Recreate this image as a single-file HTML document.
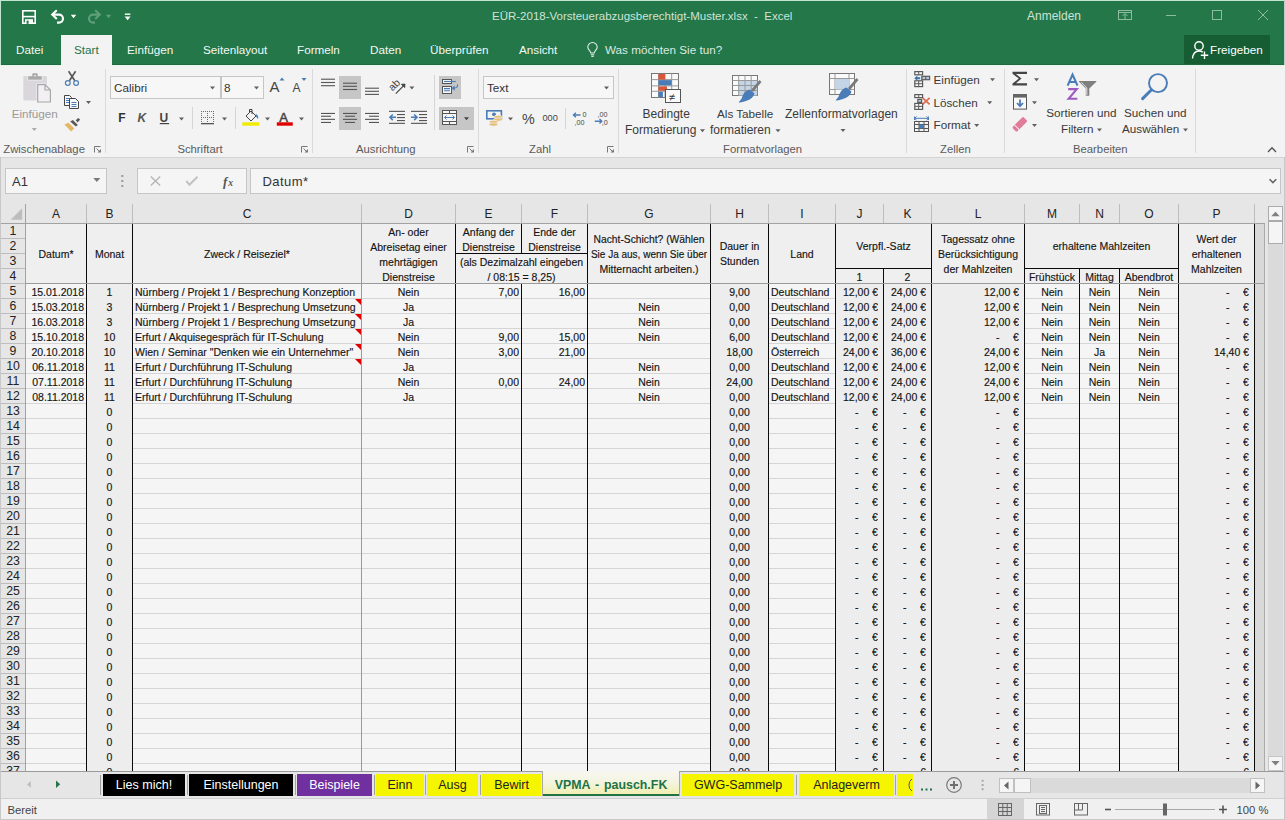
<!DOCTYPE html><html><head><meta charset="utf-8"><title>Excel</title><style>
*{margin:0;padding:0;box-sizing:border-box}
html,body{width:1285px;height:820px;overflow:hidden}
body{position:relative;background:#f3f3f3;font-family:"Liberation Sans",sans-serif;color:#222}
.a{position:absolute}
.t{position:absolute;white-space:nowrap}
.c{position:absolute;white-space:nowrap;font-size:10.5px;line-height:15px;height:15px;color:#1b1b1b;overflow:hidden;-webkit-text-stroke:0.15px #141414}
.cc{text-align:center}
.cr{text-align:right}
.hl{position:absolute;height:1px}
.vl{position:absolute;width:1px}
svg{position:absolute;overflow:visible}
</style></head><body><div class="a" style="left:0px;top:0px;width:1285px;height:65px;background:#237749"></div>
<div class="a" style="left:0px;top:0px;width:1285px;height:1px;background:#c3e6d1"></div>
<div class="a" style="left:0px;top:0px;width:1px;height:65px;background:#c3e6d1"></div>
<div class="a" style="left:0px;top:65px;width:1px;height:755px;background:#c8c8c8"></div>
<div class="a" style="left:1284px;top:0px;width:1px;height:820px;background:#c8c8c8"></div>
<svg style="left:0;top:0" width="140" height="34">
<g fill="none" stroke="#fff" stroke-width="1.6">
<rect x="22.8" y="10.8" width="12.4" height="12.4"/>
<line x1="22.8" y1="16.6" x2="35.2" y2="16.6"/>
</g>
<rect x="25" y="19.2" width="8" height="4.6" fill="#fff"/>
<rect x="26.6" y="20.6" width="2" height="3.2" fill="#237749"/>
<path d="M56.8 10.2 L52.2 14.6 L56.8 19" fill="none" stroke="#fff" stroke-width="2.1"/>
<path d="M52.8 14.6 H59 A4 4 0 0 1 59 22.6 H57" fill="none" stroke="#fff" stroke-width="2.1"/>
<path d="M70.8 14.8 H76.3 L73.55 18.2 Z" fill="#fff"/>
<path d="M95.2 10.2 L99.8 14.6 L95.2 19" fill="none" stroke="#5f9f7b" stroke-width="2.1"/>
<path d="M99.2 14.6 H93 A4 4 0 0 0 93 22.6 H95" fill="none" stroke="#5f9f7b" stroke-width="2.1"/>
<path d="M105.8 14.8 H111.3 L108.55 18.2 Z" fill="#5f9f7b"/>
<rect x="124.8" y="13.5" width="5.6" height="1.4" fill="#fff"/>
<path d="M124.6 16.4 H130.6 L127.6 20.2 Z" fill="#fff"/>
</svg>
<div class="t" style="left:492px;top:9px;font-size:11.5px;line-height:14px;color:#cfe3d6">EÜR-2018-Vorsteuerabzugsberechtigt-Muster.xlsx&nbsp; -&nbsp; Excel</div>
<div class="t" style="left:1027px;top:9px;font-size:12px;line-height:14px;color:#cfe3d6">Anmelden</div>
<svg style="left:1100px;top:0" width="185" height="34">
<g fill="none" stroke="#8fbca1" stroke-width="1">
<rect x="18.5" y="10.5" width="13" height="9"/>
<line x1="18.5" y1="12.5" x2="31.5" y2="12.5"/>
<path d="M22.5 16 L25 13.5 L27.5 16 M25 13.8 V19"/>
<line x1="66" y1="15.5" x2="76" y2="15.5"/>
<rect x="112.5" y="10.5" width="9" height="9"/>
<path d="M158 10 L168 20 M168 10 L158 20"/>
</g></svg>
<div class="a" style="left:61px;top:35px;width:51px;height:30px;background:#f3f3f3"></div>
<div class="t" style="left:16px;top:43px;font-size:11.7px;line-height:14px;color:#f4f8f5;">Datei</div>
<div class="t" style="left:74px;top:43px;font-size:11.7px;line-height:14px;color:#237749;">Start</div>
<div class="t" style="left:127px;top:43px;font-size:11.7px;line-height:14px;color:#f4f8f5;">Einfügen</div>
<div class="t" style="left:203px;top:43px;font-size:11.7px;line-height:14px;color:#f4f8f5;">Seitenlayout</div>
<div class="t" style="left:297px;top:43px;font-size:11.7px;line-height:14px;color:#f4f8f5;">Formeln</div>
<div class="t" style="left:370px;top:43px;font-size:11.7px;line-height:14px;color:#f4f8f5;">Daten</div>
<div class="t" style="left:430px;top:43px;font-size:11.7px;line-height:14px;color:#f4f8f5;">Überprüfen</div>
<div class="t" style="left:519px;top:43px;font-size:11.7px;line-height:14px;color:#f4f8f5;">Ansicht</div>
<div class="t" style="left:605px;top:43px;font-size:11.7px;line-height:14px;color:#dbe9e0;">Was möchten Sie tun?</div>
<svg style="left:586px;top:41.5px" width="16" height="20">
<g fill="none" stroke="#e4efe8" stroke-width="1.1">
<path d="M4.8 11 C4.8 8.8 1.8 7.8 1.8 5.2 A4.7 4.7 0 0 1 11.2 5.2 C11.2 7.8 8.2 8.8 8.2 11 Z"/>
<line x1="4.8" y1="12.8" x2="8.2" y2="12.8"/>
<line x1="5.3" y1="14.4" x2="7.7" y2="14.4"/>
</g></svg>
<div class="a" style="left:1184px;top:35px;width:86px;height:30px;background:#165d34"></div>
<svg style="left:1190px;top:38px" width="24" height="24">
<g fill="none" stroke="#fff" stroke-width="1.4">
<circle cx="9" cy="8" r="4.2"/>
<path d="M2.5 20.5 C3 15.5 5.5 13 9 13 C10.5 13 11.8 13.4 12.8 14.2"/>
<path d="M14.5 13.5 V21 M10.8 17.2 H18.2"/>
</g></svg>
<div class="t" style="left:1210px;top:43px;font-size:11.7px;line-height:14px;color:#fff">Freigeben</div>
<div class="a" style="left:0px;top:65px;width:1285px;height:92px;background:#f3f3f3"></div>
<div class="a" style="left:1px;top:64px;width:60px;height:1px;background:#1f6a40"></div>
<div class="a" style="left:112px;top:64px;width:1172px;height:1px;background:#1f6a40"></div>
<div class="a" style="left:1px;top:65px;width:60px;height:1px;background:#e3f5e9"></div>
<div class="a" style="left:112px;top:65px;width:1172px;height:1px;background:#e3f5e9"></div>
<div class="a" style="left:1px;top:157px;width:1283px;height:1px;background:#d4d4d4"></div>
<div class="a" style="left:105px;top:69px;width:1px;height:84px;background:#dadada"></div>
<div class="a" style="left:312px;top:69px;width:1px;height:84px;background:#dadada"></div>
<div class="a" style="left:478px;top:69px;width:1px;height:84px;background:#dadada"></div>
<div class="a" style="left:618px;top:69px;width:1px;height:84px;background:#dadada"></div>
<div class="a" style="left:906px;top:69px;width:1px;height:84px;background:#dadada"></div>
<div class="a" style="left:1004px;top:69px;width:1px;height:84px;background:#dadada"></div>
<div class="a" style="left:1195px;top:69px;width:1px;height:84px;background:#dadada"></div>
<div class="t" style="left:3.3px;top:141.58px;font-size:11.3px;line-height:14px;color:#5a5a5a;">Zwischenablage</div>
<div class="t" style="left:177.4px;top:141.58px;font-size:11.3px;line-height:14px;color:#5a5a5a;">Schriftart</div>
<div class="t" style="left:356px;top:141.58px;font-size:11.3px;line-height:14px;color:#5a5a5a;">Ausrichtung</div>
<div class="t" style="left:529px;top:141.58px;font-size:11.3px;line-height:14px;color:#5a5a5a;">Zahl</div>
<div class="t" style="left:723px;top:141.58px;font-size:11.3px;line-height:14px;color:#5a5a5a;">Formatvorlagen</div>
<div class="t" style="left:940px;top:141.58px;font-size:11.3px;line-height:14px;color:#5a5a5a;">Zellen</div>
<div class="t" style="left:1073px;top:141.58px;font-size:11.3px;line-height:14px;color:#5a5a5a;">Bearbeiten</div>
<div class="t" style="left:11.7px;top:106.75px;font-size:11.7px;line-height:14px;color:#9a9a9a;">Einfügen</div>
<div class="a" style="left:110px;top:76px;width:111px;height:23px;background:#f7f7f7;border:1px solid #c6c6c6"></div>
<div class="a" style="left:221px;top:76px;width:43px;height:23px;background:#f7f7f7;border:1px solid #c6c6c6"></div>
<div class="t" style="left:114px;top:80.95px;font-size:11.7px;line-height:14px;color:#333;">Calibri</div>
<div class="t" style="left:224px;top:80.95px;font-size:11.7px;line-height:14px;color:#333;">8</div>
<div class="a" style="left:192px;top:107px;width:1px;height:22px;background:#d5d5d5"></div>
<div class="a" style="left:235px;top:107px;width:1px;height:22px;background:#d5d5d5"></div>
<div class="a" style="left:339px;top:76px;width:22px;height:23px;background:#c6c6c6"></div>
<div class="a" style="left:339px;top:107px;width:22px;height:23px;background:#c6c6c6"></div>
<div class="a" style="left:439px;top:76px;width:22px;height:23px;background:#c6c6c6"></div>
<div class="a" style="left:439px;top:107px;width:35px;height:23px;background:#c6c6c6"></div>
<div class="a" style="left:434px;top:75px;width:1px;height:55px;background:#d5d5d5"></div>
<div class="a" style="left:483px;top:76px;width:131px;height:23px;background:#f7f7f7;border:1px solid #c6c6c6"></div>
<div class="t" style="left:487px;top:80.95px;font-size:11.7px;line-height:14px;color:#333;">Text</div>
<div class="a" style="left:565px;top:108px;width:1px;height:21px;background:#d5d5d5"></div>
<div class="t" style="left:642.5px;top:106.84px;font-size:12px;line-height:14px;color:#3a3a3a;">Bedingte</div>
<div class="t" style="left:625px;top:122.84px;font-size:12px;line-height:14px;color:#3a3a3a;">Formatierung</div>
<div class="t" style="left:717px;top:106.95px;font-size:11.7px;line-height:14px;color:#3a3a3a;">Als Tabelle</div>
<div class="t" style="left:710px;top:122.84px;font-size:12px;line-height:14px;color:#3a3a3a;">formatieren</div>
<div class="t" style="left:785px;top:106.84px;font-size:12px;line-height:14px;color:#3a3a3a;">Zellenformatvorlagen</div>
<div class="t" style="left:933.5px;top:72.75px;font-size:11.7px;line-height:14px;color:#3a3a3a;">Einfügen</div>
<div class="t" style="left:933.5px;top:95.65px;font-size:11.7px;line-height:14px;color:#3a3a3a;">Löschen</div>
<div class="t" style="left:933.5px;top:118.45px;font-size:11.7px;line-height:14px;color:#3a3a3a;">Format</div>
<div class="t" style="left:1046.3px;top:106.45px;font-size:11.7px;line-height:14px;color:#3a3a3a;">Sortieren und</div>
<div class="t" style="left:1061px;top:122.45px;font-size:11.7px;line-height:14px;color:#3a3a3a;">Filtern</div>
<div class="t" style="left:1124px;top:106.45px;font-size:11.7px;line-height:14px;color:#3a3a3a;">Suchen und</div>
<div class="t" style="left:1122px;top:122.45px;font-size:11.7px;line-height:14px;color:#3a3a3a;">Auswählen</div>
<div class="a" style="left:1px;top:158px;width:1283px;height:46px;background:#e6e6e6"></div>
<div class="a" style="left:5px;top:168px;width:102px;height:26px;background:#f5f5f5;border:1px solid #c6c6c6"></div>
<div class="t" style="left:12px;top:175.1px;font-size:13px;line-height:14px;color:#333;">A1</div>
<div class="a" style="left:137px;top:168px;width:110px;height:26px;background:#f5f5f5;border:1px solid #c6c6c6"></div>
<div class="a" style="left:250px;top:168px;width:1031px;height:26px;background:#f5f5f5;border:1px solid #c6c6c6"></div>
<div class="t" style="left:262.5px;top:175.1px;font-size:13px;line-height:14px;color:#333;letter-spacing:0.45px">Datum*</div>
<div class="a" style="left:1px;top:204px;width:1264px;height:19px;background:#e6e6e6"></div>
<div class="a" style="left:1px;top:223px;width:1264px;height:1px;background:#a2a2a2"></div>
<div class="a" style="left:86px;top:204px;width:1px;height:19px;background:#bdbdbd"></div>
<div class="a" style="left:132px;top:204px;width:1px;height:19px;background:#bdbdbd"></div>
<div class="a" style="left:361px;top:204px;width:1px;height:19px;background:#bdbdbd"></div>
<div class="a" style="left:455px;top:204px;width:1px;height:19px;background:#bdbdbd"></div>
<div class="a" style="left:521px;top:204px;width:1px;height:19px;background:#bdbdbd"></div>
<div class="a" style="left:587px;top:204px;width:1px;height:19px;background:#bdbdbd"></div>
<div class="a" style="left:710px;top:204px;width:1px;height:19px;background:#bdbdbd"></div>
<div class="a" style="left:768px;top:204px;width:1px;height:19px;background:#bdbdbd"></div>
<div class="a" style="left:835px;top:204px;width:1px;height:19px;background:#bdbdbd"></div>
<div class="a" style="left:883px;top:204px;width:1px;height:19px;background:#bdbdbd"></div>
<div class="a" style="left:931px;top:204px;width:1px;height:19px;background:#bdbdbd"></div>
<div class="a" style="left:1024px;top:204px;width:1px;height:19px;background:#bdbdbd"></div>
<div class="a" style="left:1079px;top:204px;width:1px;height:19px;background:#bdbdbd"></div>
<div class="a" style="left:1119px;top:204px;width:1px;height:19px;background:#bdbdbd"></div>
<div class="a" style="left:1178px;top:204px;width:1px;height:19px;background:#bdbdbd"></div>
<div class="a" style="left:1254px;top:204px;width:1px;height:19px;background:#bdbdbd"></div>
<div class="t" style="left:26px;top:205px;width:60px;text-align:center;font-size:12px;line-height:18px;color:#222">A</div>
<div class="t" style="left:87px;top:205px;width:45px;text-align:center;font-size:12px;line-height:18px;color:#222">B</div>
<div class="t" style="left:133px;top:205px;width:228px;text-align:center;font-size:12px;line-height:18px;color:#222">C</div>
<div class="t" style="left:362px;top:205px;width:93px;text-align:center;font-size:12px;line-height:18px;color:#222">D</div>
<div class="t" style="left:456px;top:205px;width:65px;text-align:center;font-size:12px;line-height:18px;color:#222">E</div>
<div class="t" style="left:522px;top:205px;width:65px;text-align:center;font-size:12px;line-height:18px;color:#222">F</div>
<div class="t" style="left:588px;top:205px;width:122px;text-align:center;font-size:12px;line-height:18px;color:#222">G</div>
<div class="t" style="left:711px;top:205px;width:57px;text-align:center;font-size:12px;line-height:18px;color:#222">H</div>
<div class="t" style="left:769px;top:205px;width:66px;text-align:center;font-size:12px;line-height:18px;color:#222">I</div>
<div class="t" style="left:836px;top:205px;width:47px;text-align:center;font-size:12px;line-height:18px;color:#222">J</div>
<div class="t" style="left:884px;top:205px;width:47px;text-align:center;font-size:12px;line-height:18px;color:#222">K</div>
<div class="t" style="left:932px;top:205px;width:92px;text-align:center;font-size:12px;line-height:18px;color:#222">L</div>
<div class="t" style="left:1025px;top:205px;width:54px;text-align:center;font-size:12px;line-height:18px;color:#222">M</div>
<div class="t" style="left:1080px;top:205px;width:39px;text-align:center;font-size:12px;line-height:18px;color:#222">N</div>
<div class="t" style="left:1120px;top:205px;width:58px;text-align:center;font-size:12px;line-height:18px;color:#222">O</div>
<div class="t" style="left:1179px;top:205px;width:75px;text-align:center;font-size:12px;line-height:18px;color:#222">P</div>
<div class="a" style="left:1px;top:224px;width:24px;height:547px;background:#e6e6e6"></div>
<div class="a" style="left:25px;top:204px;width:1px;height:567px;background:#a2a2a2"></div>
<div class="a" style="left:1px;top:238px;width:24px;height:1px;background:#bdbdbd"></div>
<div class="t" style="left:1px;top:223.5px;width:24px;text-align:center;font-size:12.3px;line-height:15px;color:#222">1</div>
<div class="a" style="left:1px;top:253px;width:24px;height:1px;background:#bdbdbd"></div>
<div class="t" style="left:1px;top:238.5px;width:24px;text-align:center;font-size:12.3px;line-height:15px;color:#222">2</div>
<div class="a" style="left:1px;top:268px;width:24px;height:1px;background:#bdbdbd"></div>
<div class="t" style="left:1px;top:253.5px;width:24px;text-align:center;font-size:12.3px;line-height:15px;color:#222">3</div>
<div class="a" style="left:1px;top:283px;width:24px;height:1px;background:#bdbdbd"></div>
<div class="t" style="left:1px;top:268.5px;width:24px;text-align:center;font-size:12.3px;line-height:15px;color:#222">4</div>
<div class="a" style="left:1px;top:298px;width:24px;height:1px;background:#bdbdbd"></div>
<div class="t" style="left:1px;top:283.5px;width:24px;text-align:center;font-size:12.3px;line-height:15px;color:#222">5</div>
<div class="a" style="left:1px;top:313px;width:24px;height:1px;background:#bdbdbd"></div>
<div class="t" style="left:1px;top:298.5px;width:24px;text-align:center;font-size:12.3px;line-height:15px;color:#222">6</div>
<div class="a" style="left:1px;top:328px;width:24px;height:1px;background:#bdbdbd"></div>
<div class="t" style="left:1px;top:313.5px;width:24px;text-align:center;font-size:12.3px;line-height:15px;color:#222">7</div>
<div class="a" style="left:1px;top:343px;width:24px;height:1px;background:#bdbdbd"></div>
<div class="t" style="left:1px;top:328.5px;width:24px;text-align:center;font-size:12.3px;line-height:15px;color:#222">8</div>
<div class="a" style="left:1px;top:358px;width:24px;height:1px;background:#bdbdbd"></div>
<div class="t" style="left:1px;top:343.5px;width:24px;text-align:center;font-size:12.3px;line-height:15px;color:#222">9</div>
<div class="a" style="left:1px;top:373px;width:24px;height:1px;background:#bdbdbd"></div>
<div class="t" style="left:1px;top:358.5px;width:24px;text-align:center;font-size:12.3px;line-height:15px;color:#222">10</div>
<div class="a" style="left:1px;top:388px;width:24px;height:1px;background:#bdbdbd"></div>
<div class="t" style="left:1px;top:373.5px;width:24px;text-align:center;font-size:12.3px;line-height:15px;color:#222">11</div>
<div class="a" style="left:1px;top:403px;width:24px;height:1px;background:#bdbdbd"></div>
<div class="t" style="left:1px;top:388.5px;width:24px;text-align:center;font-size:12.3px;line-height:15px;color:#222">12</div>
<div class="a" style="left:1px;top:418px;width:24px;height:1px;background:#bdbdbd"></div>
<div class="t" style="left:1px;top:403.5px;width:24px;text-align:center;font-size:12.3px;line-height:15px;color:#222">13</div>
<div class="a" style="left:1px;top:433px;width:24px;height:1px;background:#bdbdbd"></div>
<div class="t" style="left:1px;top:418.5px;width:24px;text-align:center;font-size:12.3px;line-height:15px;color:#222">14</div>
<div class="a" style="left:1px;top:448px;width:24px;height:1px;background:#bdbdbd"></div>
<div class="t" style="left:1px;top:433.5px;width:24px;text-align:center;font-size:12.3px;line-height:15px;color:#222">15</div>
<div class="a" style="left:1px;top:463px;width:24px;height:1px;background:#bdbdbd"></div>
<div class="t" style="left:1px;top:448.5px;width:24px;text-align:center;font-size:12.3px;line-height:15px;color:#222">16</div>
<div class="a" style="left:1px;top:478px;width:24px;height:1px;background:#bdbdbd"></div>
<div class="t" style="left:1px;top:463.5px;width:24px;text-align:center;font-size:12.3px;line-height:15px;color:#222">17</div>
<div class="a" style="left:1px;top:493px;width:24px;height:1px;background:#bdbdbd"></div>
<div class="t" style="left:1px;top:478.5px;width:24px;text-align:center;font-size:12.3px;line-height:15px;color:#222">18</div>
<div class="a" style="left:1px;top:508px;width:24px;height:1px;background:#bdbdbd"></div>
<div class="t" style="left:1px;top:493.5px;width:24px;text-align:center;font-size:12.3px;line-height:15px;color:#222">19</div>
<div class="a" style="left:1px;top:523px;width:24px;height:1px;background:#bdbdbd"></div>
<div class="t" style="left:1px;top:508.5px;width:24px;text-align:center;font-size:12.3px;line-height:15px;color:#222">20</div>
<div class="a" style="left:1px;top:538px;width:24px;height:1px;background:#bdbdbd"></div>
<div class="t" style="left:1px;top:523.5px;width:24px;text-align:center;font-size:12.3px;line-height:15px;color:#222">21</div>
<div class="a" style="left:1px;top:553px;width:24px;height:1px;background:#bdbdbd"></div>
<div class="t" style="left:1px;top:538.5px;width:24px;text-align:center;font-size:12.3px;line-height:15px;color:#222">22</div>
<div class="a" style="left:1px;top:568px;width:24px;height:1px;background:#bdbdbd"></div>
<div class="t" style="left:1px;top:553.5px;width:24px;text-align:center;font-size:12.3px;line-height:15px;color:#222">23</div>
<div class="a" style="left:1px;top:583px;width:24px;height:1px;background:#bdbdbd"></div>
<div class="t" style="left:1px;top:568.5px;width:24px;text-align:center;font-size:12.3px;line-height:15px;color:#222">24</div>
<div class="a" style="left:1px;top:598px;width:24px;height:1px;background:#bdbdbd"></div>
<div class="t" style="left:1px;top:583.5px;width:24px;text-align:center;font-size:12.3px;line-height:15px;color:#222">25</div>
<div class="a" style="left:1px;top:613px;width:24px;height:1px;background:#bdbdbd"></div>
<div class="t" style="left:1px;top:598.5px;width:24px;text-align:center;font-size:12.3px;line-height:15px;color:#222">26</div>
<div class="a" style="left:1px;top:628px;width:24px;height:1px;background:#bdbdbd"></div>
<div class="t" style="left:1px;top:613.5px;width:24px;text-align:center;font-size:12.3px;line-height:15px;color:#222">27</div>
<div class="a" style="left:1px;top:643px;width:24px;height:1px;background:#bdbdbd"></div>
<div class="t" style="left:1px;top:628.5px;width:24px;text-align:center;font-size:12.3px;line-height:15px;color:#222">28</div>
<div class="a" style="left:1px;top:658px;width:24px;height:1px;background:#bdbdbd"></div>
<div class="t" style="left:1px;top:643.5px;width:24px;text-align:center;font-size:12.3px;line-height:15px;color:#222">29</div>
<div class="a" style="left:1px;top:673px;width:24px;height:1px;background:#bdbdbd"></div>
<div class="t" style="left:1px;top:658.5px;width:24px;text-align:center;font-size:12.3px;line-height:15px;color:#222">30</div>
<div class="a" style="left:1px;top:688px;width:24px;height:1px;background:#bdbdbd"></div>
<div class="t" style="left:1px;top:673.5px;width:24px;text-align:center;font-size:12.3px;line-height:15px;color:#222">31</div>
<div class="a" style="left:1px;top:703px;width:24px;height:1px;background:#bdbdbd"></div>
<div class="t" style="left:1px;top:688.5px;width:24px;text-align:center;font-size:12.3px;line-height:15px;color:#222">32</div>
<div class="a" style="left:1px;top:718px;width:24px;height:1px;background:#bdbdbd"></div>
<div class="t" style="left:1px;top:703.5px;width:24px;text-align:center;font-size:12.3px;line-height:15px;color:#222">33</div>
<div class="a" style="left:1px;top:733px;width:24px;height:1px;background:#bdbdbd"></div>
<div class="t" style="left:1px;top:718.5px;width:24px;text-align:center;font-size:12.3px;line-height:15px;color:#222">34</div>
<div class="a" style="left:1px;top:748px;width:24px;height:1px;background:#bdbdbd"></div>
<div class="t" style="left:1px;top:733.5px;width:24px;text-align:center;font-size:12.3px;line-height:15px;color:#222">35</div>
<div class="a" style="left:1px;top:763px;width:24px;height:1px;background:#bdbdbd"></div>
<div class="t" style="left:1px;top:748.5px;width:24px;text-align:center;font-size:12.3px;line-height:15px;color:#222">36</div>
<div class="a" style="left:1px;top:778px;width:24px;height:1px;background:#bdbdbd"></div>
<div class="t" style="left:1px;top:763.5px;width:24px;text-align:center;font-size:12.3px;line-height:15px;color:#222">37</div>
<div class="a" style="left:26px;top:224px;width:1238px;height:547px;background:#f5f5f5"></div>
<div class="a" style="left:1255px;top:224px;width:9px;height:547px;background:#d9d9d9"></div>
<div class="a" style="left:1264px;top:224px;width:1px;height:547px;background:#ababab"></div>
<div class="a" style="left:26px;top:224px;width:1228px;height:60px;background:#efefef"></div>
<div class="a" style="left:26px;top:298px;width:1228px;height:1px;background:#d5d5d5"></div>
<div class="a" style="left:26px;top:313px;width:1228px;height:1px;background:#d5d5d5"></div>
<div class="a" style="left:26px;top:328px;width:1228px;height:1px;background:#d5d5d5"></div>
<div class="a" style="left:26px;top:343px;width:1228px;height:1px;background:#d5d5d5"></div>
<div class="a" style="left:26px;top:358px;width:1228px;height:1px;background:#d5d5d5"></div>
<div class="a" style="left:26px;top:373px;width:1228px;height:1px;background:#d5d5d5"></div>
<div class="a" style="left:26px;top:388px;width:1228px;height:1px;background:#d5d5d5"></div>
<div class="a" style="left:26px;top:403px;width:1228px;height:1px;background:#d5d5d5"></div>
<div class="a" style="left:26px;top:418px;width:1228px;height:1px;background:#d5d5d5"></div>
<div class="a" style="left:26px;top:433px;width:1228px;height:1px;background:#d5d5d5"></div>
<div class="a" style="left:26px;top:448px;width:1228px;height:1px;background:#d5d5d5"></div>
<div class="a" style="left:26px;top:463px;width:1228px;height:1px;background:#d5d5d5"></div>
<div class="a" style="left:26px;top:478px;width:1228px;height:1px;background:#d5d5d5"></div>
<div class="a" style="left:26px;top:493px;width:1228px;height:1px;background:#d5d5d5"></div>
<div class="a" style="left:26px;top:508px;width:1228px;height:1px;background:#d5d5d5"></div>
<div class="a" style="left:26px;top:523px;width:1228px;height:1px;background:#d5d5d5"></div>
<div class="a" style="left:26px;top:538px;width:1228px;height:1px;background:#d5d5d5"></div>
<div class="a" style="left:26px;top:553px;width:1228px;height:1px;background:#d5d5d5"></div>
<div class="a" style="left:26px;top:568px;width:1228px;height:1px;background:#d5d5d5"></div>
<div class="a" style="left:26px;top:583px;width:1228px;height:1px;background:#d5d5d5"></div>
<div class="a" style="left:26px;top:598px;width:1228px;height:1px;background:#d5d5d5"></div>
<div class="a" style="left:26px;top:613px;width:1228px;height:1px;background:#d5d5d5"></div>
<div class="a" style="left:26px;top:628px;width:1228px;height:1px;background:#d5d5d5"></div>
<div class="a" style="left:26px;top:643px;width:1228px;height:1px;background:#d5d5d5"></div>
<div class="a" style="left:26px;top:658px;width:1228px;height:1px;background:#d5d5d5"></div>
<div class="a" style="left:26px;top:673px;width:1228px;height:1px;background:#d5d5d5"></div>
<div class="a" style="left:26px;top:688px;width:1228px;height:1px;background:#d5d5d5"></div>
<div class="a" style="left:26px;top:703px;width:1228px;height:1px;background:#d5d5d5"></div>
<div class="a" style="left:26px;top:718px;width:1228px;height:1px;background:#d5d5d5"></div>
<div class="a" style="left:26px;top:733px;width:1228px;height:1px;background:#d5d5d5"></div>
<div class="a" style="left:26px;top:748px;width:1228px;height:1px;background:#d5d5d5"></div>
<div class="a" style="left:26px;top:763px;width:1228px;height:1px;background:#d5d5d5"></div>
<div class="a" style="left:26px;top:778px;width:1228px;height:1px;background:#d5d5d5"></div>
<div class="a" style="left:87px;top:284px;width:45px;height:487px;background:#ededed"></div>
<div class="a" style="left:711px;top:284px;width:57px;height:487px;background:#ededed"></div>
<div class="a" style="left:836px;top:284px;width:47px;height:487px;background:#ededed"></div>
<div class="a" style="left:884px;top:284px;width:47px;height:487px;background:#ededed"></div>
<div class="a" style="left:932px;top:284px;width:92px;height:487px;background:#ededed"></div>
<div class="a" style="left:1179px;top:284px;width:75px;height:487px;background:#ededed"></div>
<div class="a" style="left:86px;top:224px;width:1px;height:547px;background:#0a0a0a"></div>
<div class="a" style="left:132px;top:224px;width:1px;height:547px;background:#0a0a0a"></div>
<div class="a" style="left:455px;top:224px;width:1px;height:547px;background:#0a0a0a"></div>
<div class="a" style="left:587px;top:224px;width:1px;height:547px;background:#0a0a0a"></div>
<div class="a" style="left:710px;top:224px;width:1px;height:547px;background:#0a0a0a"></div>
<div class="a" style="left:768px;top:224px;width:1px;height:547px;background:#0a0a0a"></div>
<div class="a" style="left:835px;top:224px;width:1px;height:547px;background:#0a0a0a"></div>
<div class="a" style="left:931px;top:224px;width:1px;height:547px;background:#0a0a0a"></div>
<div class="a" style="left:1024px;top:224px;width:1px;height:547px;background:#0a0a0a"></div>
<div class="a" style="left:1178px;top:224px;width:1px;height:547px;background:#0a0a0a"></div>
<div class="a" style="left:1254px;top:224px;width:1px;height:547px;background:#0a0a0a"></div>
<div class="a" style="left:361px;top:224px;width:1px;height:547px;background:#9a9a9a"></div>
<div class="a" style="left:521px;top:224px;width:1px;height:30px;background:#0a0a0a"></div>
<div class="a" style="left:521px;top:284px;width:1px;height:487px;background:#0a0a0a"></div>
<div class="a" style="left:883px;top:269px;width:1px;height:502px;background:#0a0a0a"></div>
<div class="a" style="left:1079px;top:269px;width:1px;height:502px;background:#0a0a0a"></div>
<div class="a" style="left:1119px;top:269px;width:1px;height:502px;background:#0a0a0a"></div>
<div class="a" style="left:455px;top:253px;width:133px;height:1px;background:#0a0a0a"></div>
<div class="a" style="left:835px;top:268px;width:97px;height:1px;background:#0a0a0a"></div>
<div class="a" style="left:1024px;top:268px;width:155px;height:1px;background:#0a0a0a"></div>
<div class="a" style="left:26px;top:283px;width:1238px;height:1px;background:#9a9a9a"></div>
<div class="c cc" style="left:26px;top:247.2px;width:60px;font-size:10.5px;color:#141414">Datum*</div>
<div class="c cc" style="left:87px;top:247.2px;width:45px;font-size:10.5px;color:#141414">Monat</div>
<div class="c cc" style="left:133px;top:247.2px;width:228px;font-size:10.5px;color:#141414">Zweck / Reiseziel*</div>
<div class="c cc" style="left:362px;top:225.2px;width:93px;font-size:10.5px;color:#141414">An- oder</div>
<div class="c cc" style="left:362px;top:240.2px;width:93px;font-size:10.5px;color:#141414">Abreisetag einer</div>
<div class="c cc" style="left:362px;top:255.2px;width:93px;font-size:10.5px;color:#141414">mehrtägigen</div>
<div class="c cc" style="left:362px;top:270.2px;width:93px;font-size:10.5px;color:#141414">Dienstreise</div>
<div class="c cc" style="left:456px;top:225.2px;width:65px;font-size:10.5px;color:#141414">Anfang der</div>
<div class="c cc" style="left:456px;top:240.2px;width:65px;font-size:10.5px;color:#141414">Dienstreise</div>
<div class="c cc" style="left:522px;top:225.2px;width:65px;font-size:10.5px;color:#141414">Ende der</div>
<div class="c cc" style="left:522px;top:240.2px;width:65px;font-size:10.5px;color:#141414">Dienstreise</div>
<div class="c cc" style="left:456px;top:255.2px;width:131px;font-size:10.5px;color:#141414">(als Dezimalzahl eingeben</div>
<div class="c cc" style="left:456px;top:270.2px;width:131px;font-size:10.5px;color:#141414">/ 08:15 = 8,25)</div>
<div class="c cc" style="left:588px;top:232.2px;width:122px;font-size:10.3px;color:#141414">Nacht-Schicht? (Wählen</div>
<div class="c cc" style="left:588px;top:247.2px;width:122px;font-size:10.0px;color:#141414">Sie Ja aus, wenn Sie über</div>
<div class="c cc" style="left:588px;top:262.2px;width:122px;font-size:10.5px;color:#141414">Mitternacht arbeiten.)</div>
<div class="c cc" style="left:711px;top:239.2px;width:57px;font-size:10.5px;color:#141414">Dauer in</div>
<div class="c cc" style="left:711px;top:254.2px;width:57px;font-size:10.5px;color:#141414">Stunden</div>
<div class="c cc" style="left:769px;top:247.2px;width:66px;font-size:10.5px;color:#141414">Land</div>
<div class="c cc" style="left:836px;top:239.2px;width:95px;font-size:10.5px;color:#141414">Verpfl.-Satz</div>
<div class="c cc" style="left:836px;top:270.2px;width:47px;font-size:10.5px;color:#141414">1</div>
<div class="c cc" style="left:884px;top:270.2px;width:47px;font-size:10.5px;color:#141414">2</div>
<div class="c cc" style="left:932px;top:232.2px;width:92px;font-size:10.5px;color:#141414">Tagessatz ohne</div>
<div class="c cc" style="left:932px;top:247.2px;width:92px;font-size:10.5px;color:#141414">Berücksichtigung</div>
<div class="c cc" style="left:932px;top:262.2px;width:92px;font-size:10.5px;color:#141414">der Mahlzeiten</div>
<div class="c cc" style="left:1025px;top:239.2px;width:153px;font-size:10.5px;color:#141414">erhaltene Mahlzeiten</div>
<div class="c cc" style="left:1025px;top:270.2px;width:54px;font-size:10.5px;color:#141414">Frühstück</div>
<div class="c cc" style="left:1080px;top:270.2px;width:39px;font-size:10.5px;color:#141414">Mittag</div>
<div class="c cc" style="left:1120px;top:270.2px;width:58px;font-size:10.5px;color:#141414">Abendbrot</div>
<div class="c cc" style="left:1179px;top:232.2px;width:75px;font-size:10.5px;color:#141414">Wert der</div>
<div class="c cc" style="left:1179px;top:247.2px;width:75px;font-size:10.5px;color:#141414">erhaltenen</div>
<div class="c cc" style="left:1179px;top:262.2px;width:75px;font-size:10.5px;color:#141414">Mahlzeiten</div>
<div class="c cr" style="left:26px;top:285.2px;width:58px;font-size:10.5px;color:#141414">15.01.2018</div>
<div class="c cc" style="left:87px;top:285.2px;width:45px;font-size:10.5px;color:#141414">1</div>
<div class="c" style="left:135px;top:285.2px;width:226px;font-size:10.5px;color:#141414">Nürnberg / Projekt 1 / Besprechung Konzeption</div>
<div class="c cc" style="left:362px;top:285.2px;width:93px;font-size:10.5px;color:#141414">Nein</div>
<div class="c cr" style="left:456px;top:285.2px;width:63px;font-size:10.5px;color:#141414">7,00</div>
<div class="c cr" style="left:522px;top:285.2px;width:63px;font-size:10.5px;color:#141414">16,00</div>
<div class="c cc" style="left:711px;top:285.2px;width:57px;font-size:10.5px;color:#141414">9,00</div>
<div class="c" style="left:771px;top:285.2px;width:64px;font-size:10.5px;color:#141414">Deutschland</div>
<div class="c cr" style="left:836px;top:285.2px;width:42px;font-size:10.5px;color:#141414">12,00&nbsp;€</div>
<div class="c cr" style="left:884px;top:285.2px;width:42px;font-size:10.5px;color:#141414">24,00&nbsp;€</div>
<div class="c cr" style="left:932px;top:285.2px;width:87px;font-size:10.5px;color:#141414">12,00&nbsp;€</div>
<div class="c cc" style="left:1025px;top:285.2px;width:54px;font-size:10.5px;color:#141414">Nein</div>
<div class="c cc" style="left:1080px;top:285.2px;width:39px;font-size:10.5px;color:#141414">Nein</div>
<div class="c cc" style="left:1120px;top:285.2px;width:58px;font-size:10.5px;color:#141414">Nein</div>
<div class="c" style="left:1243px;top:285.2px;font-size:10.5px;color:#141414">€</div>
<div class="c" style="left:1226px;top:285.2px;font-size:10.5px;color:#141414">-</div>
<div class="c cr" style="left:26px;top:300.2px;width:58px;font-size:10.5px;color:#141414">15.03.2018</div>
<div class="c cc" style="left:87px;top:300.2px;width:45px;font-size:10.5px;color:#141414">3</div>
<div class="c" style="left:135px;top:300.2px;width:226px;font-size:10.5px;color:#141414">Nürnberg / Projekt 1 / Besprechung Umsetzung</div>
<div class="c cc" style="left:362px;top:300.2px;width:93px;font-size:10.5px;color:#141414">Ja</div>
<div class="c cc" style="left:588px;top:300.2px;width:122px;font-size:10.5px;color:#141414">Nein</div>
<div class="c cc" style="left:711px;top:300.2px;width:57px;font-size:10.5px;color:#141414">0,00</div>
<div class="c" style="left:771px;top:300.2px;width:64px;font-size:10.5px;color:#141414">Deutschland</div>
<div class="c cr" style="left:836px;top:300.2px;width:42px;font-size:10.5px;color:#141414">12,00&nbsp;€</div>
<div class="c cr" style="left:884px;top:300.2px;width:42px;font-size:10.5px;color:#141414">24,00&nbsp;€</div>
<div class="c cr" style="left:932px;top:300.2px;width:87px;font-size:10.5px;color:#141414">12,00&nbsp;€</div>
<div class="c cc" style="left:1025px;top:300.2px;width:54px;font-size:10.5px;color:#141414">Nein</div>
<div class="c cc" style="left:1080px;top:300.2px;width:39px;font-size:10.5px;color:#141414">Nein</div>
<div class="c cc" style="left:1120px;top:300.2px;width:58px;font-size:10.5px;color:#141414">Nein</div>
<div class="c" style="left:1243px;top:300.2px;font-size:10.5px;color:#141414">€</div>
<div class="c" style="left:1226px;top:300.2px;font-size:10.5px;color:#141414">-</div>
<div class="c cr" style="left:26px;top:315.2px;width:58px;font-size:10.5px;color:#141414">16.03.2018</div>
<div class="c cc" style="left:87px;top:315.2px;width:45px;font-size:10.5px;color:#141414">3</div>
<div class="c" style="left:135px;top:315.2px;width:226px;font-size:10.5px;color:#141414">Nürnberg / Projekt 1 / Besprechung Umsetzung</div>
<div class="c cc" style="left:362px;top:315.2px;width:93px;font-size:10.5px;color:#141414">Ja</div>
<div class="c cc" style="left:588px;top:315.2px;width:122px;font-size:10.5px;color:#141414">Nein</div>
<div class="c cc" style="left:711px;top:315.2px;width:57px;font-size:10.5px;color:#141414">0,00</div>
<div class="c" style="left:771px;top:315.2px;width:64px;font-size:10.5px;color:#141414">Deutschland</div>
<div class="c cr" style="left:836px;top:315.2px;width:42px;font-size:10.5px;color:#141414">12,00&nbsp;€</div>
<div class="c cr" style="left:884px;top:315.2px;width:42px;font-size:10.5px;color:#141414">24,00&nbsp;€</div>
<div class="c cr" style="left:932px;top:315.2px;width:87px;font-size:10.5px;color:#141414">12,00&nbsp;€</div>
<div class="c cc" style="left:1025px;top:315.2px;width:54px;font-size:10.5px;color:#141414">Nein</div>
<div class="c cc" style="left:1080px;top:315.2px;width:39px;font-size:10.5px;color:#141414">Nein</div>
<div class="c cc" style="left:1120px;top:315.2px;width:58px;font-size:10.5px;color:#141414">Nein</div>
<div class="c" style="left:1243px;top:315.2px;font-size:10.5px;color:#141414">€</div>
<div class="c" style="left:1226px;top:315.2px;font-size:10.5px;color:#141414">-</div>
<div class="c cr" style="left:26px;top:330.2px;width:58px;font-size:10.5px;color:#141414">15.10.2018</div>
<div class="c cc" style="left:87px;top:330.2px;width:45px;font-size:10.5px;color:#141414">10</div>
<div class="c" style="left:135px;top:330.2px;width:226px;font-size:10.5px;color:#141414">Erfurt / Akquisegespräch für IT-Schulung</div>
<div class="c cc" style="left:362px;top:330.2px;width:93px;font-size:10.5px;color:#141414">Nein</div>
<div class="c cr" style="left:456px;top:330.2px;width:63px;font-size:10.5px;color:#141414">9,00</div>
<div class="c cr" style="left:522px;top:330.2px;width:63px;font-size:10.5px;color:#141414">15,00</div>
<div class="c cc" style="left:588px;top:330.2px;width:122px;font-size:10.5px;color:#141414">Nein</div>
<div class="c cc" style="left:711px;top:330.2px;width:57px;font-size:10.5px;color:#141414">6,00</div>
<div class="c" style="left:771px;top:330.2px;width:64px;font-size:10.5px;color:#141414">Deutschland</div>
<div class="c cr" style="left:836px;top:330.2px;width:42px;font-size:10.5px;color:#141414">12,00&nbsp;€</div>
<div class="c cr" style="left:884px;top:330.2px;width:42px;font-size:10.5px;color:#141414">24,00&nbsp;€</div>
<div class="c" style="left:1013px;top:330.2px;font-size:10.5px;color:#141414">€</div>
<div class="c" style="left:996px;top:330.2px;font-size:10.5px;color:#141414">-</div>
<div class="c cc" style="left:1025px;top:330.2px;width:54px;font-size:10.5px;color:#141414">Nein</div>
<div class="c cc" style="left:1080px;top:330.2px;width:39px;font-size:10.5px;color:#141414">Nein</div>
<div class="c cc" style="left:1120px;top:330.2px;width:58px;font-size:10.5px;color:#141414">Nein</div>
<div class="c" style="left:1243px;top:330.2px;font-size:10.5px;color:#141414">€</div>
<div class="c" style="left:1226px;top:330.2px;font-size:10.5px;color:#141414">-</div>
<div class="c cr" style="left:26px;top:345.2px;width:58px;font-size:10.5px;color:#141414">20.10.2018</div>
<div class="c cc" style="left:87px;top:345.2px;width:45px;font-size:10.5px;color:#141414">10</div>
<div class="c" style="left:135px;top:345.2px;width:226px;font-size:10.5px;color:#141414">Wien / Seminar "Denken wie ein Unternehmer"</div>
<div class="c cc" style="left:362px;top:345.2px;width:93px;font-size:10.5px;color:#141414">Nein</div>
<div class="c cr" style="left:456px;top:345.2px;width:63px;font-size:10.5px;color:#141414">3,00</div>
<div class="c cr" style="left:522px;top:345.2px;width:63px;font-size:10.5px;color:#141414">21,00</div>
<div class="c cc" style="left:711px;top:345.2px;width:57px;font-size:10.5px;color:#141414">18,00</div>
<div class="c" style="left:771px;top:345.2px;width:64px;font-size:10.5px;color:#141414">Österreich</div>
<div class="c cr" style="left:836px;top:345.2px;width:42px;font-size:10.5px;color:#141414">24,00&nbsp;€</div>
<div class="c cr" style="left:884px;top:345.2px;width:42px;font-size:10.5px;color:#141414">36,00&nbsp;€</div>
<div class="c cr" style="left:932px;top:345.2px;width:87px;font-size:10.5px;color:#141414">24,00&nbsp;€</div>
<div class="c cc" style="left:1025px;top:345.2px;width:54px;font-size:10.5px;color:#141414">Nein</div>
<div class="c cc" style="left:1080px;top:345.2px;width:39px;font-size:10.5px;color:#141414">Ja</div>
<div class="c cc" style="left:1120px;top:345.2px;width:58px;font-size:10.5px;color:#141414">Nein</div>
<div class="c cr" style="left:1179px;top:345.2px;width:70px;font-size:10.5px;color:#141414">14,40&nbsp;€</div>
<div class="c cr" style="left:26px;top:360.2px;width:58px;font-size:10.5px;color:#141414">06.11.2018</div>
<div class="c cc" style="left:87px;top:360.2px;width:45px;font-size:10.5px;color:#141414">11</div>
<div class="c" style="left:135px;top:360.2px;width:226px;font-size:10.5px;color:#141414">Erfurt / Durchführung IT-Schulung</div>
<div class="c cc" style="left:362px;top:360.2px;width:93px;font-size:10.5px;color:#141414">Ja</div>
<div class="c cc" style="left:588px;top:360.2px;width:122px;font-size:10.5px;color:#141414">Nein</div>
<div class="c cc" style="left:711px;top:360.2px;width:57px;font-size:10.5px;color:#141414">0,00</div>
<div class="c" style="left:771px;top:360.2px;width:64px;font-size:10.5px;color:#141414">Deutschland</div>
<div class="c cr" style="left:836px;top:360.2px;width:42px;font-size:10.5px;color:#141414">12,00&nbsp;€</div>
<div class="c cr" style="left:884px;top:360.2px;width:42px;font-size:10.5px;color:#141414">24,00&nbsp;€</div>
<div class="c cr" style="left:932px;top:360.2px;width:87px;font-size:10.5px;color:#141414">12,00&nbsp;€</div>
<div class="c cc" style="left:1025px;top:360.2px;width:54px;font-size:10.5px;color:#141414">Nein</div>
<div class="c cc" style="left:1080px;top:360.2px;width:39px;font-size:10.5px;color:#141414">Nein</div>
<div class="c cc" style="left:1120px;top:360.2px;width:58px;font-size:10.5px;color:#141414">Nein</div>
<div class="c" style="left:1243px;top:360.2px;font-size:10.5px;color:#141414">€</div>
<div class="c" style="left:1226px;top:360.2px;font-size:10.5px;color:#141414">-</div>
<div class="c cr" style="left:26px;top:375.2px;width:58px;font-size:10.5px;color:#141414">07.11.2018</div>
<div class="c cc" style="left:87px;top:375.2px;width:45px;font-size:10.5px;color:#141414">11</div>
<div class="c" style="left:135px;top:375.2px;width:226px;font-size:10.5px;color:#141414">Erfurt / Durchführung IT-Schulung</div>
<div class="c cc" style="left:362px;top:375.2px;width:93px;font-size:10.5px;color:#141414">Nein</div>
<div class="c cr" style="left:456px;top:375.2px;width:63px;font-size:10.5px;color:#141414">0,00</div>
<div class="c cr" style="left:522px;top:375.2px;width:63px;font-size:10.5px;color:#141414">24,00</div>
<div class="c cc" style="left:588px;top:375.2px;width:122px;font-size:10.5px;color:#141414">Nein</div>
<div class="c cc" style="left:711px;top:375.2px;width:57px;font-size:10.5px;color:#141414">24,00</div>
<div class="c" style="left:771px;top:375.2px;width:64px;font-size:10.5px;color:#141414">Deutschland</div>
<div class="c cr" style="left:836px;top:375.2px;width:42px;font-size:10.5px;color:#141414">12,00&nbsp;€</div>
<div class="c cr" style="left:884px;top:375.2px;width:42px;font-size:10.5px;color:#141414">24,00&nbsp;€</div>
<div class="c cr" style="left:932px;top:375.2px;width:87px;font-size:10.5px;color:#141414">24,00&nbsp;€</div>
<div class="c cc" style="left:1025px;top:375.2px;width:54px;font-size:10.5px;color:#141414">Nein</div>
<div class="c cc" style="left:1080px;top:375.2px;width:39px;font-size:10.5px;color:#141414">Nein</div>
<div class="c cc" style="left:1120px;top:375.2px;width:58px;font-size:10.5px;color:#141414">Nein</div>
<div class="c" style="left:1243px;top:375.2px;font-size:10.5px;color:#141414">€</div>
<div class="c" style="left:1226px;top:375.2px;font-size:10.5px;color:#141414">-</div>
<div class="c cr" style="left:26px;top:390.2px;width:58px;font-size:10.5px;color:#141414">08.11.2018</div>
<div class="c cc" style="left:87px;top:390.2px;width:45px;font-size:10.5px;color:#141414">11</div>
<div class="c" style="left:135px;top:390.2px;width:226px;font-size:10.5px;color:#141414">Erfurt / Durchführung IT-Schulung</div>
<div class="c cc" style="left:362px;top:390.2px;width:93px;font-size:10.5px;color:#141414">Ja</div>
<div class="c cc" style="left:588px;top:390.2px;width:122px;font-size:10.5px;color:#141414">Nein</div>
<div class="c cc" style="left:711px;top:390.2px;width:57px;font-size:10.5px;color:#141414">0,00</div>
<div class="c" style="left:771px;top:390.2px;width:64px;font-size:10.5px;color:#141414">Deutschland</div>
<div class="c cr" style="left:836px;top:390.2px;width:42px;font-size:10.5px;color:#141414">12,00&nbsp;€</div>
<div class="c cr" style="left:884px;top:390.2px;width:42px;font-size:10.5px;color:#141414">24,00&nbsp;€</div>
<div class="c cr" style="left:932px;top:390.2px;width:87px;font-size:10.5px;color:#141414">12,00&nbsp;€</div>
<div class="c cc" style="left:1025px;top:390.2px;width:54px;font-size:10.5px;color:#141414">Nein</div>
<div class="c cc" style="left:1080px;top:390.2px;width:39px;font-size:10.5px;color:#141414">Nein</div>
<div class="c cc" style="left:1120px;top:390.2px;width:58px;font-size:10.5px;color:#141414">Nein</div>
<div class="c" style="left:1243px;top:390.2px;font-size:10.5px;color:#141414">€</div>
<div class="c" style="left:1226px;top:390.2px;font-size:10.5px;color:#141414">-</div>
<div class="c cc" style="left:87px;top:405.2px;width:45px;font-size:10.5px;color:#141414">0</div>
<div class="c cc" style="left:711px;top:405.2px;width:57px;font-size:10.5px;color:#141414">0,00</div>
<div class="c" style="left:872px;top:405.2px;font-size:10.5px;color:#141414">€</div>
<div class="c" style="left:855px;top:405.2px;font-size:10.5px;color:#141414">-</div>
<div class="c" style="left:920px;top:405.2px;font-size:10.5px;color:#141414">€</div>
<div class="c" style="left:903px;top:405.2px;font-size:10.5px;color:#141414">-</div>
<div class="c" style="left:1013px;top:405.2px;font-size:10.5px;color:#141414">€</div>
<div class="c" style="left:996px;top:405.2px;font-size:10.5px;color:#141414">-</div>
<div class="c" style="left:1243px;top:405.2px;font-size:10.5px;color:#141414">€</div>
<div class="c" style="left:1226px;top:405.2px;font-size:10.5px;color:#141414">-</div>
<div class="c cc" style="left:87px;top:420.2px;width:45px;font-size:10.5px;color:#141414">0</div>
<div class="c cc" style="left:711px;top:420.2px;width:57px;font-size:10.5px;color:#141414">0,00</div>
<div class="c" style="left:872px;top:420.2px;font-size:10.5px;color:#141414">€</div>
<div class="c" style="left:855px;top:420.2px;font-size:10.5px;color:#141414">-</div>
<div class="c" style="left:920px;top:420.2px;font-size:10.5px;color:#141414">€</div>
<div class="c" style="left:903px;top:420.2px;font-size:10.5px;color:#141414">-</div>
<div class="c" style="left:1013px;top:420.2px;font-size:10.5px;color:#141414">€</div>
<div class="c" style="left:996px;top:420.2px;font-size:10.5px;color:#141414">-</div>
<div class="c" style="left:1243px;top:420.2px;font-size:10.5px;color:#141414">€</div>
<div class="c" style="left:1226px;top:420.2px;font-size:10.5px;color:#141414">-</div>
<div class="c cc" style="left:87px;top:435.2px;width:45px;font-size:10.5px;color:#141414">0</div>
<div class="c cc" style="left:711px;top:435.2px;width:57px;font-size:10.5px;color:#141414">0,00</div>
<div class="c" style="left:872px;top:435.2px;font-size:10.5px;color:#141414">€</div>
<div class="c" style="left:855px;top:435.2px;font-size:10.5px;color:#141414">-</div>
<div class="c" style="left:920px;top:435.2px;font-size:10.5px;color:#141414">€</div>
<div class="c" style="left:903px;top:435.2px;font-size:10.5px;color:#141414">-</div>
<div class="c" style="left:1013px;top:435.2px;font-size:10.5px;color:#141414">€</div>
<div class="c" style="left:996px;top:435.2px;font-size:10.5px;color:#141414">-</div>
<div class="c" style="left:1243px;top:435.2px;font-size:10.5px;color:#141414">€</div>
<div class="c" style="left:1226px;top:435.2px;font-size:10.5px;color:#141414">-</div>
<div class="c cc" style="left:87px;top:450.2px;width:45px;font-size:10.5px;color:#141414">0</div>
<div class="c cc" style="left:711px;top:450.2px;width:57px;font-size:10.5px;color:#141414">0,00</div>
<div class="c" style="left:872px;top:450.2px;font-size:10.5px;color:#141414">€</div>
<div class="c" style="left:855px;top:450.2px;font-size:10.5px;color:#141414">-</div>
<div class="c" style="left:920px;top:450.2px;font-size:10.5px;color:#141414">€</div>
<div class="c" style="left:903px;top:450.2px;font-size:10.5px;color:#141414">-</div>
<div class="c" style="left:1013px;top:450.2px;font-size:10.5px;color:#141414">€</div>
<div class="c" style="left:996px;top:450.2px;font-size:10.5px;color:#141414">-</div>
<div class="c" style="left:1243px;top:450.2px;font-size:10.5px;color:#141414">€</div>
<div class="c" style="left:1226px;top:450.2px;font-size:10.5px;color:#141414">-</div>
<div class="c cc" style="left:87px;top:465.2px;width:45px;font-size:10.5px;color:#141414">0</div>
<div class="c cc" style="left:711px;top:465.2px;width:57px;font-size:10.5px;color:#141414">0,00</div>
<div class="c" style="left:872px;top:465.2px;font-size:10.5px;color:#141414">€</div>
<div class="c" style="left:855px;top:465.2px;font-size:10.5px;color:#141414">-</div>
<div class="c" style="left:920px;top:465.2px;font-size:10.5px;color:#141414">€</div>
<div class="c" style="left:903px;top:465.2px;font-size:10.5px;color:#141414">-</div>
<div class="c" style="left:1013px;top:465.2px;font-size:10.5px;color:#141414">€</div>
<div class="c" style="left:996px;top:465.2px;font-size:10.5px;color:#141414">-</div>
<div class="c" style="left:1243px;top:465.2px;font-size:10.5px;color:#141414">€</div>
<div class="c" style="left:1226px;top:465.2px;font-size:10.5px;color:#141414">-</div>
<div class="c cc" style="left:87px;top:480.2px;width:45px;font-size:10.5px;color:#141414">0</div>
<div class="c cc" style="left:711px;top:480.2px;width:57px;font-size:10.5px;color:#141414">0,00</div>
<div class="c" style="left:872px;top:480.2px;font-size:10.5px;color:#141414">€</div>
<div class="c" style="left:855px;top:480.2px;font-size:10.5px;color:#141414">-</div>
<div class="c" style="left:920px;top:480.2px;font-size:10.5px;color:#141414">€</div>
<div class="c" style="left:903px;top:480.2px;font-size:10.5px;color:#141414">-</div>
<div class="c" style="left:1013px;top:480.2px;font-size:10.5px;color:#141414">€</div>
<div class="c" style="left:996px;top:480.2px;font-size:10.5px;color:#141414">-</div>
<div class="c" style="left:1243px;top:480.2px;font-size:10.5px;color:#141414">€</div>
<div class="c" style="left:1226px;top:480.2px;font-size:10.5px;color:#141414">-</div>
<div class="c cc" style="left:87px;top:495.2px;width:45px;font-size:10.5px;color:#141414">0</div>
<div class="c cc" style="left:711px;top:495.2px;width:57px;font-size:10.5px;color:#141414">0,00</div>
<div class="c" style="left:872px;top:495.2px;font-size:10.5px;color:#141414">€</div>
<div class="c" style="left:855px;top:495.2px;font-size:10.5px;color:#141414">-</div>
<div class="c" style="left:920px;top:495.2px;font-size:10.5px;color:#141414">€</div>
<div class="c" style="left:903px;top:495.2px;font-size:10.5px;color:#141414">-</div>
<div class="c" style="left:1013px;top:495.2px;font-size:10.5px;color:#141414">€</div>
<div class="c" style="left:996px;top:495.2px;font-size:10.5px;color:#141414">-</div>
<div class="c" style="left:1243px;top:495.2px;font-size:10.5px;color:#141414">€</div>
<div class="c" style="left:1226px;top:495.2px;font-size:10.5px;color:#141414">-</div>
<div class="c cc" style="left:87px;top:510.2px;width:45px;font-size:10.5px;color:#141414">0</div>
<div class="c cc" style="left:711px;top:510.2px;width:57px;font-size:10.5px;color:#141414">0,00</div>
<div class="c" style="left:872px;top:510.2px;font-size:10.5px;color:#141414">€</div>
<div class="c" style="left:855px;top:510.2px;font-size:10.5px;color:#141414">-</div>
<div class="c" style="left:920px;top:510.2px;font-size:10.5px;color:#141414">€</div>
<div class="c" style="left:903px;top:510.2px;font-size:10.5px;color:#141414">-</div>
<div class="c" style="left:1013px;top:510.2px;font-size:10.5px;color:#141414">€</div>
<div class="c" style="left:996px;top:510.2px;font-size:10.5px;color:#141414">-</div>
<div class="c" style="left:1243px;top:510.2px;font-size:10.5px;color:#141414">€</div>
<div class="c" style="left:1226px;top:510.2px;font-size:10.5px;color:#141414">-</div>
<div class="c cc" style="left:87px;top:525.2px;width:45px;font-size:10.5px;color:#141414">0</div>
<div class="c cc" style="left:711px;top:525.2px;width:57px;font-size:10.5px;color:#141414">0,00</div>
<div class="c" style="left:872px;top:525.2px;font-size:10.5px;color:#141414">€</div>
<div class="c" style="left:855px;top:525.2px;font-size:10.5px;color:#141414">-</div>
<div class="c" style="left:920px;top:525.2px;font-size:10.5px;color:#141414">€</div>
<div class="c" style="left:903px;top:525.2px;font-size:10.5px;color:#141414">-</div>
<div class="c" style="left:1013px;top:525.2px;font-size:10.5px;color:#141414">€</div>
<div class="c" style="left:996px;top:525.2px;font-size:10.5px;color:#141414">-</div>
<div class="c" style="left:1243px;top:525.2px;font-size:10.5px;color:#141414">€</div>
<div class="c" style="left:1226px;top:525.2px;font-size:10.5px;color:#141414">-</div>
<div class="c cc" style="left:87px;top:540.2px;width:45px;font-size:10.5px;color:#141414">0</div>
<div class="c cc" style="left:711px;top:540.2px;width:57px;font-size:10.5px;color:#141414">0,00</div>
<div class="c" style="left:872px;top:540.2px;font-size:10.5px;color:#141414">€</div>
<div class="c" style="left:855px;top:540.2px;font-size:10.5px;color:#141414">-</div>
<div class="c" style="left:920px;top:540.2px;font-size:10.5px;color:#141414">€</div>
<div class="c" style="left:903px;top:540.2px;font-size:10.5px;color:#141414">-</div>
<div class="c" style="left:1013px;top:540.2px;font-size:10.5px;color:#141414">€</div>
<div class="c" style="left:996px;top:540.2px;font-size:10.5px;color:#141414">-</div>
<div class="c" style="left:1243px;top:540.2px;font-size:10.5px;color:#141414">€</div>
<div class="c" style="left:1226px;top:540.2px;font-size:10.5px;color:#141414">-</div>
<div class="c cc" style="left:87px;top:555.2px;width:45px;font-size:10.5px;color:#141414">0</div>
<div class="c cc" style="left:711px;top:555.2px;width:57px;font-size:10.5px;color:#141414">0,00</div>
<div class="c" style="left:872px;top:555.2px;font-size:10.5px;color:#141414">€</div>
<div class="c" style="left:855px;top:555.2px;font-size:10.5px;color:#141414">-</div>
<div class="c" style="left:920px;top:555.2px;font-size:10.5px;color:#141414">€</div>
<div class="c" style="left:903px;top:555.2px;font-size:10.5px;color:#141414">-</div>
<div class="c" style="left:1013px;top:555.2px;font-size:10.5px;color:#141414">€</div>
<div class="c" style="left:996px;top:555.2px;font-size:10.5px;color:#141414">-</div>
<div class="c" style="left:1243px;top:555.2px;font-size:10.5px;color:#141414">€</div>
<div class="c" style="left:1226px;top:555.2px;font-size:10.5px;color:#141414">-</div>
<div class="c cc" style="left:87px;top:570.2px;width:45px;font-size:10.5px;color:#141414">0</div>
<div class="c cc" style="left:711px;top:570.2px;width:57px;font-size:10.5px;color:#141414">0,00</div>
<div class="c" style="left:872px;top:570.2px;font-size:10.5px;color:#141414">€</div>
<div class="c" style="left:855px;top:570.2px;font-size:10.5px;color:#141414">-</div>
<div class="c" style="left:920px;top:570.2px;font-size:10.5px;color:#141414">€</div>
<div class="c" style="left:903px;top:570.2px;font-size:10.5px;color:#141414">-</div>
<div class="c" style="left:1013px;top:570.2px;font-size:10.5px;color:#141414">€</div>
<div class="c" style="left:996px;top:570.2px;font-size:10.5px;color:#141414">-</div>
<div class="c" style="left:1243px;top:570.2px;font-size:10.5px;color:#141414">€</div>
<div class="c" style="left:1226px;top:570.2px;font-size:10.5px;color:#141414">-</div>
<div class="c cc" style="left:87px;top:585.2px;width:45px;font-size:10.5px;color:#141414">0</div>
<div class="c cc" style="left:711px;top:585.2px;width:57px;font-size:10.5px;color:#141414">0,00</div>
<div class="c" style="left:872px;top:585.2px;font-size:10.5px;color:#141414">€</div>
<div class="c" style="left:855px;top:585.2px;font-size:10.5px;color:#141414">-</div>
<div class="c" style="left:920px;top:585.2px;font-size:10.5px;color:#141414">€</div>
<div class="c" style="left:903px;top:585.2px;font-size:10.5px;color:#141414">-</div>
<div class="c" style="left:1013px;top:585.2px;font-size:10.5px;color:#141414">€</div>
<div class="c" style="left:996px;top:585.2px;font-size:10.5px;color:#141414">-</div>
<div class="c" style="left:1243px;top:585.2px;font-size:10.5px;color:#141414">€</div>
<div class="c" style="left:1226px;top:585.2px;font-size:10.5px;color:#141414">-</div>
<div class="c cc" style="left:87px;top:600.2px;width:45px;font-size:10.5px;color:#141414">0</div>
<div class="c cc" style="left:711px;top:600.2px;width:57px;font-size:10.5px;color:#141414">0,00</div>
<div class="c" style="left:872px;top:600.2px;font-size:10.5px;color:#141414">€</div>
<div class="c" style="left:855px;top:600.2px;font-size:10.5px;color:#141414">-</div>
<div class="c" style="left:920px;top:600.2px;font-size:10.5px;color:#141414">€</div>
<div class="c" style="left:903px;top:600.2px;font-size:10.5px;color:#141414">-</div>
<div class="c" style="left:1013px;top:600.2px;font-size:10.5px;color:#141414">€</div>
<div class="c" style="left:996px;top:600.2px;font-size:10.5px;color:#141414">-</div>
<div class="c" style="left:1243px;top:600.2px;font-size:10.5px;color:#141414">€</div>
<div class="c" style="left:1226px;top:600.2px;font-size:10.5px;color:#141414">-</div>
<div class="c cc" style="left:87px;top:615.2px;width:45px;font-size:10.5px;color:#141414">0</div>
<div class="c cc" style="left:711px;top:615.2px;width:57px;font-size:10.5px;color:#141414">0,00</div>
<div class="c" style="left:872px;top:615.2px;font-size:10.5px;color:#141414">€</div>
<div class="c" style="left:855px;top:615.2px;font-size:10.5px;color:#141414">-</div>
<div class="c" style="left:920px;top:615.2px;font-size:10.5px;color:#141414">€</div>
<div class="c" style="left:903px;top:615.2px;font-size:10.5px;color:#141414">-</div>
<div class="c" style="left:1013px;top:615.2px;font-size:10.5px;color:#141414">€</div>
<div class="c" style="left:996px;top:615.2px;font-size:10.5px;color:#141414">-</div>
<div class="c" style="left:1243px;top:615.2px;font-size:10.5px;color:#141414">€</div>
<div class="c" style="left:1226px;top:615.2px;font-size:10.5px;color:#141414">-</div>
<div class="c cc" style="left:87px;top:630.2px;width:45px;font-size:10.5px;color:#141414">0</div>
<div class="c cc" style="left:711px;top:630.2px;width:57px;font-size:10.5px;color:#141414">0,00</div>
<div class="c" style="left:872px;top:630.2px;font-size:10.5px;color:#141414">€</div>
<div class="c" style="left:855px;top:630.2px;font-size:10.5px;color:#141414">-</div>
<div class="c" style="left:920px;top:630.2px;font-size:10.5px;color:#141414">€</div>
<div class="c" style="left:903px;top:630.2px;font-size:10.5px;color:#141414">-</div>
<div class="c" style="left:1013px;top:630.2px;font-size:10.5px;color:#141414">€</div>
<div class="c" style="left:996px;top:630.2px;font-size:10.5px;color:#141414">-</div>
<div class="c" style="left:1243px;top:630.2px;font-size:10.5px;color:#141414">€</div>
<div class="c" style="left:1226px;top:630.2px;font-size:10.5px;color:#141414">-</div>
<div class="c cc" style="left:87px;top:645.2px;width:45px;font-size:10.5px;color:#141414">0</div>
<div class="c cc" style="left:711px;top:645.2px;width:57px;font-size:10.5px;color:#141414">0,00</div>
<div class="c" style="left:872px;top:645.2px;font-size:10.5px;color:#141414">€</div>
<div class="c" style="left:855px;top:645.2px;font-size:10.5px;color:#141414">-</div>
<div class="c" style="left:920px;top:645.2px;font-size:10.5px;color:#141414">€</div>
<div class="c" style="left:903px;top:645.2px;font-size:10.5px;color:#141414">-</div>
<div class="c" style="left:1013px;top:645.2px;font-size:10.5px;color:#141414">€</div>
<div class="c" style="left:996px;top:645.2px;font-size:10.5px;color:#141414">-</div>
<div class="c" style="left:1243px;top:645.2px;font-size:10.5px;color:#141414">€</div>
<div class="c" style="left:1226px;top:645.2px;font-size:10.5px;color:#141414">-</div>
<div class="c cc" style="left:87px;top:660.2px;width:45px;font-size:10.5px;color:#141414">0</div>
<div class="c cc" style="left:711px;top:660.2px;width:57px;font-size:10.5px;color:#141414">0,00</div>
<div class="c" style="left:872px;top:660.2px;font-size:10.5px;color:#141414">€</div>
<div class="c" style="left:855px;top:660.2px;font-size:10.5px;color:#141414">-</div>
<div class="c" style="left:920px;top:660.2px;font-size:10.5px;color:#141414">€</div>
<div class="c" style="left:903px;top:660.2px;font-size:10.5px;color:#141414">-</div>
<div class="c" style="left:1013px;top:660.2px;font-size:10.5px;color:#141414">€</div>
<div class="c" style="left:996px;top:660.2px;font-size:10.5px;color:#141414">-</div>
<div class="c" style="left:1243px;top:660.2px;font-size:10.5px;color:#141414">€</div>
<div class="c" style="left:1226px;top:660.2px;font-size:10.5px;color:#141414">-</div>
<div class="c cc" style="left:87px;top:675.2px;width:45px;font-size:10.5px;color:#141414">0</div>
<div class="c cc" style="left:711px;top:675.2px;width:57px;font-size:10.5px;color:#141414">0,00</div>
<div class="c" style="left:872px;top:675.2px;font-size:10.5px;color:#141414">€</div>
<div class="c" style="left:855px;top:675.2px;font-size:10.5px;color:#141414">-</div>
<div class="c" style="left:920px;top:675.2px;font-size:10.5px;color:#141414">€</div>
<div class="c" style="left:903px;top:675.2px;font-size:10.5px;color:#141414">-</div>
<div class="c" style="left:1013px;top:675.2px;font-size:10.5px;color:#141414">€</div>
<div class="c" style="left:996px;top:675.2px;font-size:10.5px;color:#141414">-</div>
<div class="c" style="left:1243px;top:675.2px;font-size:10.5px;color:#141414">€</div>
<div class="c" style="left:1226px;top:675.2px;font-size:10.5px;color:#141414">-</div>
<div class="c cc" style="left:87px;top:690.2px;width:45px;font-size:10.5px;color:#141414">0</div>
<div class="c cc" style="left:711px;top:690.2px;width:57px;font-size:10.5px;color:#141414">0,00</div>
<div class="c" style="left:872px;top:690.2px;font-size:10.5px;color:#141414">€</div>
<div class="c" style="left:855px;top:690.2px;font-size:10.5px;color:#141414">-</div>
<div class="c" style="left:920px;top:690.2px;font-size:10.5px;color:#141414">€</div>
<div class="c" style="left:903px;top:690.2px;font-size:10.5px;color:#141414">-</div>
<div class="c" style="left:1013px;top:690.2px;font-size:10.5px;color:#141414">€</div>
<div class="c" style="left:996px;top:690.2px;font-size:10.5px;color:#141414">-</div>
<div class="c" style="left:1243px;top:690.2px;font-size:10.5px;color:#141414">€</div>
<div class="c" style="left:1226px;top:690.2px;font-size:10.5px;color:#141414">-</div>
<div class="c cc" style="left:87px;top:705.2px;width:45px;font-size:10.5px;color:#141414">0</div>
<div class="c cc" style="left:711px;top:705.2px;width:57px;font-size:10.5px;color:#141414">0,00</div>
<div class="c" style="left:872px;top:705.2px;font-size:10.5px;color:#141414">€</div>
<div class="c" style="left:855px;top:705.2px;font-size:10.5px;color:#141414">-</div>
<div class="c" style="left:920px;top:705.2px;font-size:10.5px;color:#141414">€</div>
<div class="c" style="left:903px;top:705.2px;font-size:10.5px;color:#141414">-</div>
<div class="c" style="left:1013px;top:705.2px;font-size:10.5px;color:#141414">€</div>
<div class="c" style="left:996px;top:705.2px;font-size:10.5px;color:#141414">-</div>
<div class="c" style="left:1243px;top:705.2px;font-size:10.5px;color:#141414">€</div>
<div class="c" style="left:1226px;top:705.2px;font-size:10.5px;color:#141414">-</div>
<div class="c cc" style="left:87px;top:720.2px;width:45px;font-size:10.5px;color:#141414">0</div>
<div class="c cc" style="left:711px;top:720.2px;width:57px;font-size:10.5px;color:#141414">0,00</div>
<div class="c" style="left:872px;top:720.2px;font-size:10.5px;color:#141414">€</div>
<div class="c" style="left:855px;top:720.2px;font-size:10.5px;color:#141414">-</div>
<div class="c" style="left:920px;top:720.2px;font-size:10.5px;color:#141414">€</div>
<div class="c" style="left:903px;top:720.2px;font-size:10.5px;color:#141414">-</div>
<div class="c" style="left:1013px;top:720.2px;font-size:10.5px;color:#141414">€</div>
<div class="c" style="left:996px;top:720.2px;font-size:10.5px;color:#141414">-</div>
<div class="c" style="left:1243px;top:720.2px;font-size:10.5px;color:#141414">€</div>
<div class="c" style="left:1226px;top:720.2px;font-size:10.5px;color:#141414">-</div>
<div class="c cc" style="left:87px;top:735.2px;width:45px;font-size:10.5px;color:#141414">0</div>
<div class="c cc" style="left:711px;top:735.2px;width:57px;font-size:10.5px;color:#141414">0,00</div>
<div class="c" style="left:872px;top:735.2px;font-size:10.5px;color:#141414">€</div>
<div class="c" style="left:855px;top:735.2px;font-size:10.5px;color:#141414">-</div>
<div class="c" style="left:920px;top:735.2px;font-size:10.5px;color:#141414">€</div>
<div class="c" style="left:903px;top:735.2px;font-size:10.5px;color:#141414">-</div>
<div class="c" style="left:1013px;top:735.2px;font-size:10.5px;color:#141414">€</div>
<div class="c" style="left:996px;top:735.2px;font-size:10.5px;color:#141414">-</div>
<div class="c" style="left:1243px;top:735.2px;font-size:10.5px;color:#141414">€</div>
<div class="c" style="left:1226px;top:735.2px;font-size:10.5px;color:#141414">-</div>
<div class="c cc" style="left:87px;top:750.2px;width:45px;font-size:10.5px;color:#141414">0</div>
<div class="c cc" style="left:711px;top:750.2px;width:57px;font-size:10.5px;color:#141414">0,00</div>
<div class="c" style="left:872px;top:750.2px;font-size:10.5px;color:#141414">€</div>
<div class="c" style="left:855px;top:750.2px;font-size:10.5px;color:#141414">-</div>
<div class="c" style="left:920px;top:750.2px;font-size:10.5px;color:#141414">€</div>
<div class="c" style="left:903px;top:750.2px;font-size:10.5px;color:#141414">-</div>
<div class="c" style="left:1013px;top:750.2px;font-size:10.5px;color:#141414">€</div>
<div class="c" style="left:996px;top:750.2px;font-size:10.5px;color:#141414">-</div>
<div class="c" style="left:1243px;top:750.2px;font-size:10.5px;color:#141414">€</div>
<div class="c" style="left:1226px;top:750.2px;font-size:10.5px;color:#141414">-</div>
<div class="c cc" style="left:87px;top:765.2px;width:45px;font-size:10.5px;color:#141414">0</div>
<div class="c cc" style="left:711px;top:765.2px;width:57px;font-size:10.5px;color:#141414">0,00</div>
<div class="c" style="left:872px;top:765.2px;font-size:10.5px;color:#141414">€</div>
<div class="c" style="left:855px;top:765.2px;font-size:10.5px;color:#141414">-</div>
<div class="c" style="left:920px;top:765.2px;font-size:10.5px;color:#141414">€</div>
<div class="c" style="left:903px;top:765.2px;font-size:10.5px;color:#141414">-</div>
<div class="c" style="left:1013px;top:765.2px;font-size:10.5px;color:#141414">€</div>
<div class="c" style="left:996px;top:765.2px;font-size:10.5px;color:#141414">-</div>
<div class="c" style="left:1243px;top:765.2px;font-size:10.5px;color:#141414">€</div>
<div class="c" style="left:1226px;top:765.2px;font-size:10.5px;color:#141414">-</div>
<div class="a" style="left:1265px;top:204px;width:19px;height:567px;background:#e6e6e6"></div>
<div class="a" style="left:1268px;top:244px;width:15px;height:512px;background:#dadada"></div>
<div class="a" style="left:1268px;top:206px;width:15px;height:15px;background:#f5f5f5;border:1px solid #ababab"></div>
<div class="a" style="left:1268px;top:221px;width:15px;height:23px;background:#f5f5f5;border:1px solid #ababab"></div>
<div class="a" style="left:1268px;top:756px;width:15px;height:15px;background:#f5f5f5;border:1px solid #c6c6c6"></div>
<div class="a" style="left:1px;top:771px;width:1283px;height:1px;background:#9a9a9a"></div>
<div class="a" style="left:1px;top:772px;width:1283px;height:27px;background:#e6e6e6"></div>
<div class="a" style="left:100px;top:775px;width:1px;height:20px;background:#a0a0a0"></div>
<div class="a" style="left:103px;top:774px;width:82px;height:22px;background:#000"></div>
<div class="t" style="left:103px;top:777px;width:82px;text-align:center;font-size:12.5px;line-height:16px;color:#fff">Lies mich!</div>
<div class="a" style="left:187px;top:775px;width:1px;height:20px;background:#a0a0a0"></div>
<div class="a" style="left:189px;top:774px;width:104px;height:22px;background:#000"></div>
<div class="t" style="left:189px;top:777px;width:104px;text-align:center;font-size:12.5px;line-height:16px;color:#fff">Einstellungen</div>
<div class="a" style="left:295px;top:775px;width:1px;height:20px;background:#a0a0a0"></div>
<div class="a" style="left:297px;top:774px;width:75px;height:22px;background:#7030a0"></div>
<div class="t" style="left:297px;top:777px;width:75px;text-align:center;font-size:12.5px;line-height:16px;color:#fff">Beispiele</div>
<div class="a" style="left:374px;top:775px;width:1px;height:20px;background:#a0a0a0"></div>
<div class="a" style="left:376px;top:774px;width:48px;height:22px;background:#f5f500"></div>
<div class="t" style="left:376px;top:777px;width:48px;text-align:center;font-size:12.5px;line-height:16px;color:#222">Einn</div>
<div class="a" style="left:425px;top:775px;width:1px;height:20px;background:#a0a0a0"></div>
<div class="a" style="left:427px;top:774px;width:51px;height:22px;background:#f5f500"></div>
<div class="t" style="left:427px;top:777px;width:51px;text-align:center;font-size:12.5px;line-height:16px;color:#222">Ausg</div>
<div class="a" style="left:480px;top:775px;width:1px;height:20px;background:#a0a0a0"></div>
<div class="a" style="left:482px;top:774px;width:59px;height:22px;background:#f5f500"></div>
<div class="t" style="left:482px;top:777px;width:59px;text-align:center;font-size:12.5px;line-height:16px;color:#222">Bewirt</div>
<div class="a" style="left:542px;top:771px;width:138px;height:25px;background:linear-gradient(#f7f7f2,#f4f4e0 45%,#f0eea8);border-left:1px solid #a8a8a8;border-right:1px solid #a8a8a8"></div>
<div class="a" style="left:543px;top:794px;width:136px;height:2px;background:#217346"></div>
<div class="t" style="left:542px;top:777px;width:138px;text-align:center;font-size:12.4px;line-height:16px;font-weight:bold;word-spacing:1.5px;color:#217346">VPMA - pausch.FK</div>
<div class="a" style="left:682px;top:774px;width:112px;height:22px;background:#f5f500"></div>
<div class="t" style="left:682px;top:777px;width:112px;text-align:center;font-size:12.5px;line-height:16px;color:#222">GWG-Sammelp</div>
<div class="a" style="left:796px;top:775px;width:1px;height:20px;background:#a0a0a0"></div>
<div class="a" style="left:799px;top:774px;width:95px;height:22px;background:#f5f500"></div>
<div class="t" style="left:799px;top:777px;width:95px;text-align:center;font-size:12.5px;line-height:16px;color:#222">Anlageverm</div>
<div class="a" style="left:895px;top:775px;width:1px;height:20px;background:#a0a0a0"></div>
<div class="a" style="left:897px;top:774px;width:16px;height:22px;background:#f5f500"></div>
<div class="a" style="left:999px;top:778px;width:266px;height:15px;background:#dadada"></div>
<div class="a" style="left:999px;top:778px;width:15px;height:15px;background:#f5f5f5;border:1px solid #c0c0c0"></div>
<div class="a" style="left:1014px;top:778px;width:17px;height:15px;background:#f5f5f5;border:1px solid #c0c0c0"></div>
<div class="a" style="left:1250px;top:778px;width:15px;height:15px;background:#f5f5f5;border:1px solid #c0c0c0"></div>
<div class="a" style="left:1px;top:798px;width:1283px;height:1px;background:#d0d0d0"></div>
<div class="a" style="left:1px;top:799px;width:1283px;height:20px;background:#f0f0f0"></div>
<div class="a" style="left:0px;top:819px;width:1285px;height:1px;background:#c8c8c8"></div>
<div class="t" style="left:7.5px;top:803.08px;font-size:11.3px;line-height:14px;color:#444;">Bereit</div>
<div class="a" style="left:987px;top:799px;width:37px;height:20px;background:#d5d5d5"></div>
<div class="t" style="left:1236.5px;top:803.08px;font-size:11.3px;line-height:14px;color:#444;">100 %</div>
<svg style="left:0;top:0" width="1285" height="820"><g fill="none" stroke="#777" stroke-width="1"><path d="M94.5 152.5 V146.5 H100.5"/><path d="M96.5 148.5 L100 152"/></g><path d="M97.5 152.5 H101 V149 Z" fill="#777"/><g fill="none" stroke="#777" stroke-width="1"><path d="M301.5 152.5 V146.5 H307.5"/><path d="M303.5 148.5 L307 152"/></g><path d="M304.5 152.5 H308 V149 Z" fill="#777"/><g fill="none" stroke="#777" stroke-width="1"><path d="M467.5 152.5 V146.5 H473.5"/><path d="M469.5 148.5 L473 152"/></g><path d="M470.5 152.5 H474 V149 Z" fill="#777"/><g fill="none" stroke="#777" stroke-width="1"><path d="M607.5 152.5 V146.5 H613.5"/><path d="M609.5 148.5 L613 152"/></g><path d="M610.5 152.5 H614 V149 Z" fill="#777"/><rect x="23.3" y="76" width="23.7" height="24.6" rx="0.8" fill="#d9d7db"/>
<rect x="27.5" y="75.6" width="15" height="4.8" fill="#f3f3f3"/>
<rect x="28.2" y="76.2" width="13.6" height="3.5" fill="#a9a9a9"/>
<rect x="32.3" y="73.3" width="5.4" height="3.6" rx="0.8" fill="#a9a9a9"/>
<rect x="34.2" y="75" width="1.6" height="1.4" fill="#f3f3f3"/>
<path d="M36.5 83.4 H45.5 L51.5 89.4 V103.2 H36.5 Z" fill="#f3f3f3"/>
<path d="M37.7 84.6 H45 L50.4 90 V102 H37.7 Z" fill="#f2f0f3" stroke="#a8a8a8" stroke-width="1.2"/>
<path d="M45 84.6 V90 H50.4" fill="none" stroke="#a8a8a8" stroke-width="1.2"/><path d="M31.8 128 h5 l-2.5 3 z" fill="#aaaaaa"/><path d="M68.6 71.3 L74.8 80.8 M75.6 71.3 L69.4 80.8" stroke="#555" stroke-width="1.6"/>
<g fill="none" stroke-width="1.2" stroke="#4f7fb3"><circle cx="67.8" cy="83" r="2.4"/><circle cx="76.1" cy="83" r="2.4"/></g><g stroke="#444" stroke-width="1" fill="#f7f7f7">
<path d="M64.5 95.5 H69.5 L71.5 97.5 V105.5 H64.5 Z"/>
<path d="M69.5 98.5 H75.5 L78.5 101.5 V108.5 H69.5 Z"/>
</g>
<g stroke="#4a7cb8" stroke-width="1"><path d="M66 98.5 H69 M66 100.5 H69 M66 102.5 H69 M71.5 102.5 H76.5 M71.5 104.5 H76.5 M71.5 106.5 H76.5"/></g><path d="M86 101 h5 l-2.5 3 z" fill="#606060"/><path d="M64.4 124.6 L68.5 122.8 L74.3 128.4 L71.1 131.6 Z" fill="#e5b765"/>
<path d="M70.2 121.4 L72.9 119.9 L77.9 124.9 L75.8 126.6 Z" fill="#5a5a5a"/>
<path d="M75.8 120.2 L78.1 117.9 L80.2 119.6 L77.6 122.5 Z" fill="#5a5a5a"/><path d="M210 86.5 h5 l-2.5 3 z" fill="#606060"/><path d="M254 86.5 h5 l-2.5 3 z" fill="#606060"/><g fill="#444">
<text x="269.5" y="92" font-family="Liberation Sans" font-size="15">A</text>
<text x="292.5" y="92" font-family="Liberation Sans" font-size="12">A</text>
</g>
<path d="M279.5 80.5 L282 77.5 L284.5 80.5 Z" fill="#4a7cb8"/>
<path d="M301.5 78 L304 81 L306.5 78 Z" fill="#4a7cb8"/><text x="118.3" y="122" font-family="Liberation Sans" font-weight="bold" font-size="12" fill="#333">F</text>
<text x="137.5" y="122" font-family="Liberation Sans" font-weight="bold" font-style="italic" font-size="12" fill="#555">K</text>
<text x="159.6" y="122" font-family="Liberation Sans" font-weight="bold" font-size="12" fill="#444">U</text>
<rect x="159.8" y="123" width="9.3" height="1.2" fill="#444"/><path d="M179 117.4 h5 l-2.5 3 z" fill="#606060"/><g fill="#6a6a6a"><rect x="213" y="113" width="1" height="1"/><rect x="213" y="119" width="1" height="1"/><rect x="201" y="111" width="1" height="1"/><rect x="201" y="117" width="1" height="1"/><rect x="203" y="111" width="1" height="1"/><rect x="203" y="117" width="1" height="1"/><rect x="207" y="111" width="1" height="1"/><rect x="207" y="117" width="1" height="1"/><rect x="213" y="115" width="1" height="1"/><rect x="213" y="121" width="1" height="1"/><rect x="205" y="111" width="1" height="1"/><rect x="205" y="117" width="1" height="1"/><rect x="211" y="111" width="1" height="1"/><rect x="209" y="111" width="1" height="1"/><rect x="209" y="117" width="1" height="1"/><rect x="201" y="113" width="1" height="1"/><rect x="201" y="119" width="1" height="1"/><rect x="211" y="117" width="1" height="1"/><rect x="207" y="113" width="1" height="1"/><rect x="207" y="119" width="1" height="1"/><rect x="213" y="111" width="1" height="1"/><rect x="213" y="117" width="1" height="1"/><rect x="201" y="115" width="1" height="1"/><rect x="201" y="121" width="1" height="1"/><rect x="207" y="115" width="1" height="1"/><rect x="207" y="121" width="1" height="1"/></g><rect x="201" y="123" width="13" height="1.3" fill="#555"/><path d="M222 117.4 h5 l-2.5 3 z" fill="#606060"/><path d="M246 116 L251 111 L256 116 L251 121 Z" fill="none" stroke="#444" stroke-width="1"/>
<path d="M249.5 112.5 V109.5 H252 V114" fill="none" stroke="#444" stroke-width="1"/>
<path d="M256 114 Q259 116 258 119 Q256 117 255.5 115 Z" fill="#4a7cb8"/>
<rect x="242.3" y="122.3" width="17" height="3.4" fill="#f0ec00"/><path d="M265 117.4 h5 l-2.5 3 z" fill="#606060"/><text x="279.3" y="121.5" font-family="Liberation Sans" font-size="13" fill="#444" stroke="#444" stroke-width="0.5">A</text>
<rect x="276.8" y="122.3" width="16" height="3.4" fill="#e00000"/><path d="M299 117.4 h5 l-2.5 3 z" fill="#606060"/><rect x="321" y="78.65" width="14" height="1.1" fill="#555"/><rect x="321" y="81.95" width="14" height="1.1" fill="#555"/><rect x="321" y="85.15" width="14" height="1.1" fill="#555"/><rect x="343" y="82.65" width="14" height="1.1" fill="#555"/><rect x="343" y="85.75" width="14" height="1.1" fill="#555"/><rect x="343" y="88.95" width="14" height="1.1" fill="#555"/><rect x="365" y="87.65" width="14" height="1.1" fill="#555"/><rect x="365" y="90.75" width="14" height="1.1" fill="#555"/><rect x="365" y="93.85000000000001" width="14" height="1.1" fill="#555"/><text x="0" y="0" transform="translate(392.6,91.6) rotate(-45)" font-family="Liberation Sans" font-size="10.5" fill="#444">ab</text>
<path d="M395.8 93.6 L404.2 85.2" stroke="#444" stroke-width="1.2"/><path d="M401.3 84.3 L405 84 L404.7 87.7 Z" fill="#444" stroke="#444" stroke-width="0.8"/><path d="M409.4 86.4 h5 l-2.5 3 z" fill="#606060"/><rect x="321" y="112.9" width="14" height="1.1" fill="#555"/><rect x="321" y="115.7" width="10" height="1.1" fill="#555"/><rect x="321" y="118.8" width="14" height="1.1" fill="#555"/><rect x="321" y="121.9" width="10" height="1.1" fill="#555"/><rect x="343" y="112.9" width="14" height="1.1" fill="#555"/><rect x="345" y="115.7" width="10" height="1.1" fill="#555"/><rect x="343" y="118.8" width="14" height="1.1" fill="#555"/><rect x="345" y="121.9" width="10" height="1.1" fill="#555"/><rect x="365" y="112.9" width="14" height="1.1" fill="#555"/><rect x="369" y="115.7" width="10" height="1.1" fill="#555"/><rect x="365" y="118.8" width="14" height="1.1" fill="#555"/><rect x="369" y="121.9" width="10" height="1.1" fill="#555"/><g fill="#555"><rect x="389" y="110.8" width="16" height="1.1"/><rect x="397" y="114" width="8" height="1.1"/><rect x="397" y="117" width="8" height="1.1"/><rect x="397" y="120" width="8" height="1.1"/><rect x="389" y="122.8" width="16" height="1.1"/>
<rect x="411" y="110.8" width="16" height="1.1"/><rect x="419" y="114" width="8" height="1.1"/><rect x="419" y="117" width="8" height="1.1"/><rect x="419" y="120" width="8" height="1.1"/><rect x="411" y="122.8" width="16" height="1.1"/></g>
<g fill="none" stroke="#4a7cb8" stroke-width="1.6"><path d="M390 117.3 H396 M392.8 114.5 L390 117.3 L392.8 120.1"/><path d="M411 117.3 H417 M414.2 114.5 L417 117.3 L414.2 120.1"/></g><g fill="#f7f7f7" stroke="#555" stroke-width="1"><rect x="442.5" y="79.5" width="9" height="4"/><rect x="442.5" y="86.5" width="9" height="7"/></g>
<g stroke="#4a7cb8" stroke-width="1.1" fill="none"><path d="M444 81.5 H455.8"/><path d="M444 88.6 H450 M444 90.8 H450"/><path d="M457.5 84.3 Q458.2 88 453.5 88.2"/></g>
<path d="M451.6 88.2 L454.6 85.6 L454.6 90.8 Z" fill="#4a7cb8"/><g fill="#f7f7f7" stroke="#555" stroke-width="1"><rect x="442.5" y="110.5" width="14" height="14"/></g>
<g stroke="#555" stroke-width="1"><path d="M442.5 113.5 H456.5 M442.5 121.5 H456.5 M449.5 110.5 V113.5 M449.5 121.5 V124.5"/></g>
<g stroke="#4a7cb8" stroke-width="1" fill="none"><path d="M444.5 117.5 H454.5 M446.5 115.5 L444.5 117.5 L446.5 119.5 M452.5 115.5 L454.5 117.5 L452.5 119.5"/></g><path d="M464 117.2 h5 l-2.5 3 z" fill="#444"/><path d="M604 86.5 h5 l-2.5 3 z" fill="#606060"/><rect x="486.8" y="110.8" width="14.6" height="8" fill="none" stroke="#4a7cb8" stroke-width="1.6"/>
<circle cx="494" cy="114.3" r="1.9" fill="#4a7cb8"/>
<g fill="#e6bd78" stroke="#f3f3f3" stroke-width="0.7"><ellipse cx="498" cy="117" rx="4.3" ry="1.7"/><ellipse cx="498" cy="119.6" rx="4.3" ry="1.7"/><ellipse cx="493.5" cy="122" rx="4.3" ry="1.7"/><ellipse cx="493.5" cy="124.5" rx="4.3" ry="1.7"/></g><path d="M508 117.5 h5 l-2.5 3 z" fill="#606060"/><text x="522" y="124.2" font-family="Liberation Sans" font-size="14.3" fill="#444">%</text>
<text x="542.5" y="120.8" font-family="Liberation Sans" font-size="9.2" fill="#444">000</text><g font-family="Liberation Sans" font-size="7.2" fill="#444"><text x="582.5" y="116.8">0</text><text x="574.5" y="124.8">,00</text>
<text x="597.5" y="116.8">,00</text><text x="601.8" y="124.8">,0</text></g>
<g stroke="#4a7cb8" stroke-width="1.4" fill="none"><path d="M573.5 115 H580.5 M575.8 112.8 L573.5 115 L575.8 117.2"/><path d="M594.8 121.2 H601.8 M599.5 119 L601.8 121.2 L599.5 123.4"/></g><rect x="651.5" y="73.5" width="27" height="24" fill="#fafafa" stroke="#777" stroke-width="1"/>
<g stroke="#999" stroke-width="1"><path d="M658.5 73.5 V97.5 M665 73.5 V97.5 M671.7 73.5 V97.5 M651.5 79.6 H678.5 M651.5 85.9 H678.5 M651.5 91.3 H678.5"/></g>
<rect x="658.4" y="74" width="6.6" height="5.6" fill="#d9583b"/>
<rect x="658.4" y="80.1" width="13.3" height="5.3" fill="#4a7cb8"/>
<rect x="658.4" y="86.4" width="8.6" height="4.4" fill="#d9583b"/>
<rect x="658.4" y="91.8" width="4.5" height="5.2" fill="#4a7cb8"/>
<rect x="665.5" y="89.5" width="15" height="13" fill="#fafafa" stroke="#555" stroke-width="1"/>
<text x="668.8" y="100.5" font-family="Liberation Sans" font-size="11" fill="#333">≠</text><path d="M700 129.3 h5 l-2.5 3 z" fill="#606060"/><rect x="732.5" y="75.5" width="25" height="20" fill="#fafafa" stroke="#777" stroke-width="1"/>
<rect x="738.7" y="80.5" width="18.5" height="15" fill="#c5d5e8"/>
<g stroke="#999" stroke-width="1"><path d="M738.7 75.5 V95.5 M745 75.5 V95.5 M751.2 75.5 V95.5 M732.5 80.5 H757.5 M732.5 85.5 H757.5 M732.5 90.5 H757.5"/></g>
<path d="M751 90 L759.5 80 L761.5 82 L753 92 Z" fill="#7a7a7a"/>
<path d="M749.5 89.5 L754.5 93.5 Q753 99 746 101 Q741 102.5 738.5 102.5 Q742 99 743 95 Q745 90.5 749.5 89.5 Z" fill="#4a7cb8"/><path d="M775.5 129.3 h5 l-2.5 3 z" fill="#606060"/><rect x="829.5" y="73.5" width="25" height="21" fill="#fafafa" stroke="#777" stroke-width="1"/>
<g stroke="#999" stroke-width="1"><path d="M835 73.5 V94.5 M849 73.5 V94.5 M829.5 78.5 H854.5 M829.5 89.5 H854.5"/></g>
<rect x="835.5" y="79" width="13.5" height="10.5" fill="#c5d5e8"/>
<path d="M848 88 L856.5 78 L858.5 80 L850 90 Z" fill="#7a7a7a"/>
<path d="M846.5 87.5 L851.5 91.5 Q850 97 843 99 Q838 100.5 835.5 100.5 Q839 97 840 93 Q842 88.5 846.5 87.5 Z" fill="#4a7cb8"/><path d="M840.5 129 h5 l-2.5 3 z" fill="#606060"/><g fill="#f7f7f7" stroke="#5a5a5a" stroke-width="1.2">
<rect x="914.8" y="71.6" width="7.8" height="3.2"/>
<rect x="914.8" y="80.8" width="7.8" height="5.8"/>
<rect x="921.8" y="76.3" width="7.8" height="3.4" fill="#b8c4d0"/>
</g>
<g stroke="#5a5a5a" stroke-width="1"><path d="M918.7 71.6 V74.8 M918.7 80.8 V86.6 M914.8 83.7 H922.6 M925.7 76.3 V79.7"/></g>
<path d="M914.2 78.2 L917.4 75.6 V77.2 H920.2 V79.2 H917.4 V80.8 Z" fill="#3f73ad"/><path d="M990 78.3 h5 l-2.5 3 z" fill="#606060"/><g fill="#f7f7f7" stroke="#5a5a5a" stroke-width="1.2">
<rect x="914.8" y="94.6" width="7.8" height="3"/>
<rect x="914.8" y="103.4" width="7.8" height="6"/>
<rect x="917.8" y="99.4" width="3.8" height="3" fill="#b8c4d0"/>
</g>
<g stroke="#5a5a5a" stroke-width="1"><path d="M918.7 94.6 V97.6 M918.7 103.4 V109.4 M914.8 106.4 H922.6"/></g>
<path d="M922.6 97.9 L929.6 104.3 M929.6 97.9 L922.6 104.3" stroke="#de6b4d" stroke-width="1.7"/><path d="M987.2 101.2 h5 l-2.5 3 z" fill="#606060"/><path d="M914.5 118.3 H928.5 M916.5 116.5 L914.5 118.3 L916.5 120.1 M926.5 116.5 L928.5 118.3 L926.5 120.1 M914.5 116.5 V120 M928.5 116.5 V120" fill="none" stroke="#4a7cb8" stroke-width="1"/>
<g fill="none" stroke="#555" stroke-width="1"><rect x="914.5" y="121.5" width="14" height="10"/>
<path d="M914.5 124.5 H928.5 M914.5 128.5 H928.5 M919 121.5 V131.5 M924 121.5 V131.5"/></g>
<rect x="919" y="124.5" width="5" height="4" fill="#4a7cb8"/><path d="M974.2 124 h5 l-2.5 3 z" fill="#606060"/><path d="M1012.5 71.8 H1027 V74 H1016 L1021.5 78.5 L1016 83.2 H1027 V85.5 H1012.5 V83.5 L1018.8 78.5 L1012.5 73.7 Z" fill="#444"/><path d="M1034 78.3 h5 l-2.5 3 z" fill="#606060"/><rect x="1013.5" y="94.5" width="13" height="14.6" fill="#fafafa" stroke="#555" stroke-width="1"/>
<rect x="1013" y="94" width="14" height="3.6" fill="#666"/>
<path d="M1020 99.5 V106 M1017 103 L1020 106.2 L1023 103" fill="none" stroke="#4a7cb8" stroke-width="1.8"/><path d="M1032 101.2 h5 l-2.5 3 z" fill="#606060"/><g transform="translate(1019.8,124.3) rotate(-45)"><rect x="-7.8" y="-3.2" width="15.6" height="6.4" rx="1.6" fill="#e07b98"/><rect x="-4.6" y="-3.4" width="0.9" height="6.8" fill="#f3f3f3"/></g><path d="M1032 124 h5 l-2.5 3 z" fill="#606060"/><path d="M1067.6 85.6 L1072.55 74.6 L1077.5 85.6 M1069.3 82 H1075.8" fill="none" stroke="#4a7cb8" stroke-width="2.1"/>
<path d="M1068.2 89.1 H1076.8 L1068.6 98.7 H1077.3" fill="none" stroke="#9d5bc1" stroke-width="2.1" stroke-linejoin="miter"/>
<path d="M1079 81 H1096.3 V81.8 L1089.3 88.5 V95.8 H1085.8 V88.5 L1079 81.8 Z" fill="#7f7f7f"/>
<path d="M1081.2 82.3 L1086.8 88 V95" fill="none" stroke="#f3f3f3" stroke-width="0.9"/><path d="M1097 128.5 h5 l-2.5 3 z" fill="#606060"/><circle cx="1158" cy="83.1" r="9" fill="none" stroke="#4a7cb8" stroke-width="1.9"/>
<path d="M1151.5 89.8 L1142.6 98.6" stroke="#4a7cb8" stroke-width="3" stroke-linecap="round"/><path d="M1183 128.5 h5 l-2.5 3 z" fill="#606060"/><path d="M1268 152 L1272 147.8 L1276 152" fill="none" stroke="#555" stroke-width="1.4"/><path d="M93.3 178 H100.3 L96.8 181.9 Z" fill="#7a7a7a"/><g fill="#9a9a9a"><rect x="121.3" y="175" width="2" height="2"/><rect x="121.3" y="180" width="2" height="2"/><rect x="121.3" y="185" width="2" height="2"/></g><path d="M150.8 176.5 L160.2 185.5 M160.2 176.5 L150.8 185.5" stroke="#b4b4b4" stroke-width="1.3"/><path d="M186.3 181 L189.5 184.8 L197.5 176.8" fill="none" stroke="#c2c2c2" stroke-width="2"/><text x="223" y="186" font-family="Liberation Serif" font-style="italic" font-weight="bold" font-size="13" fill="#555">f</text><text x="228.3" y="186" font-family="Liberation Serif" font-style="italic" font-weight="bold" font-size="9.5" fill="#555">x</text><path d="M1269.5 179.2 L1272.9 182.6 L1276.3 179.2" fill="none" stroke="#666" stroke-width="1.6"/><path d="M22.2 208.3 V219.8 H10.7 Z" fill="#bdbdbd"/><path d="M355 299 H361 V305 Z" fill="#e00000"/><path d="M355 314 H361 V320 Z" fill="#e00000"/><path d="M355 329 H361 V335 Z" fill="#e00000"/><path d="M355 344 H361 V350 Z" fill="#e00000"/><path d="M355 359 H361 V365 Z" fill="#e00000"/><path d="M1271.3 216.3 H1279.7 L1275.5 211.8 Z" fill="#808080"/><path d="M1271.3 761 H1279.7 L1275.5 765.5 Z" fill="#808080"/><path d="M30.8 781 V787.8 L27 784.4 Z" fill="#bdbdbd"/><path d="M56 780.5 V788 L60.2 784.25 Z" fill="#237749"/><path d="M912 779 A5 6.5 0 0 0 912 791" fill="none" stroke="#555" stroke-width="1" /><g fill="#217346"><rect x="921" y="788.5" width="2" height="2"/><rect x="925.5" y="788.5" width="2" height="2"/><rect x="930" y="788.5" width="2" height="2"/></g><circle cx="954" cy="785" r="7.3" fill="none" stroke="#7a7a7a" stroke-width="1.2"/><path d="M954 781 V789 M950 785 H958" stroke="#6f6f6f" stroke-width="1.9"/><g fill="#a8a8a8"><rect x="981.6" y="779.8" width="2" height="2"/><rect x="981.6" y="784" width="2" height="2"/><rect x="981.6" y="788.2" width="2" height="2"/></g><path d="M1008.5 781.5 V789.5 L1004 785.5 Z" fill="#666"/><path d="M1255.5 781.5 V789.5 L1260 785.5 Z" fill="#666"/><g fill="none" stroke="#666" stroke-width="1">
<rect x="998.5" y="803.5" width="13" height="12"/>
<path d="M1002.8 803.5 V815.5 M1007.2 803.5 V815.5 M998.5 807.5 H1011.5 M998.5 811.5 H1011.5"/>
<rect x="1036.5" y="803.5" width="13" height="11.5"/>
<rect x="1039.5" y="805.5" width="7" height="8"/>
<path d="M1041 807.5 H1045 M1041 809.5 H1045 M1041 811.5 H1045"/>
<rect x="1074.5" y="803.5" width="13" height="11.5"/>
<path d="M1074.5 810 H1082.5 V803.5 M1078.5 803.5 V810"/>
</g>
<rect x="1105" y="808.7" width="6" height="1.6" fill="#555"/>
<rect x="1115" y="809" width="100" height="1" fill="#a8a8a8"/>
<rect x="1163" y="803.5" width="4" height="12" fill="#666"/>
<path d="M1219 809.5 H1227 M1223 805.5 V813.5" stroke="#555" stroke-width="1.6"/></svg></body></html>
